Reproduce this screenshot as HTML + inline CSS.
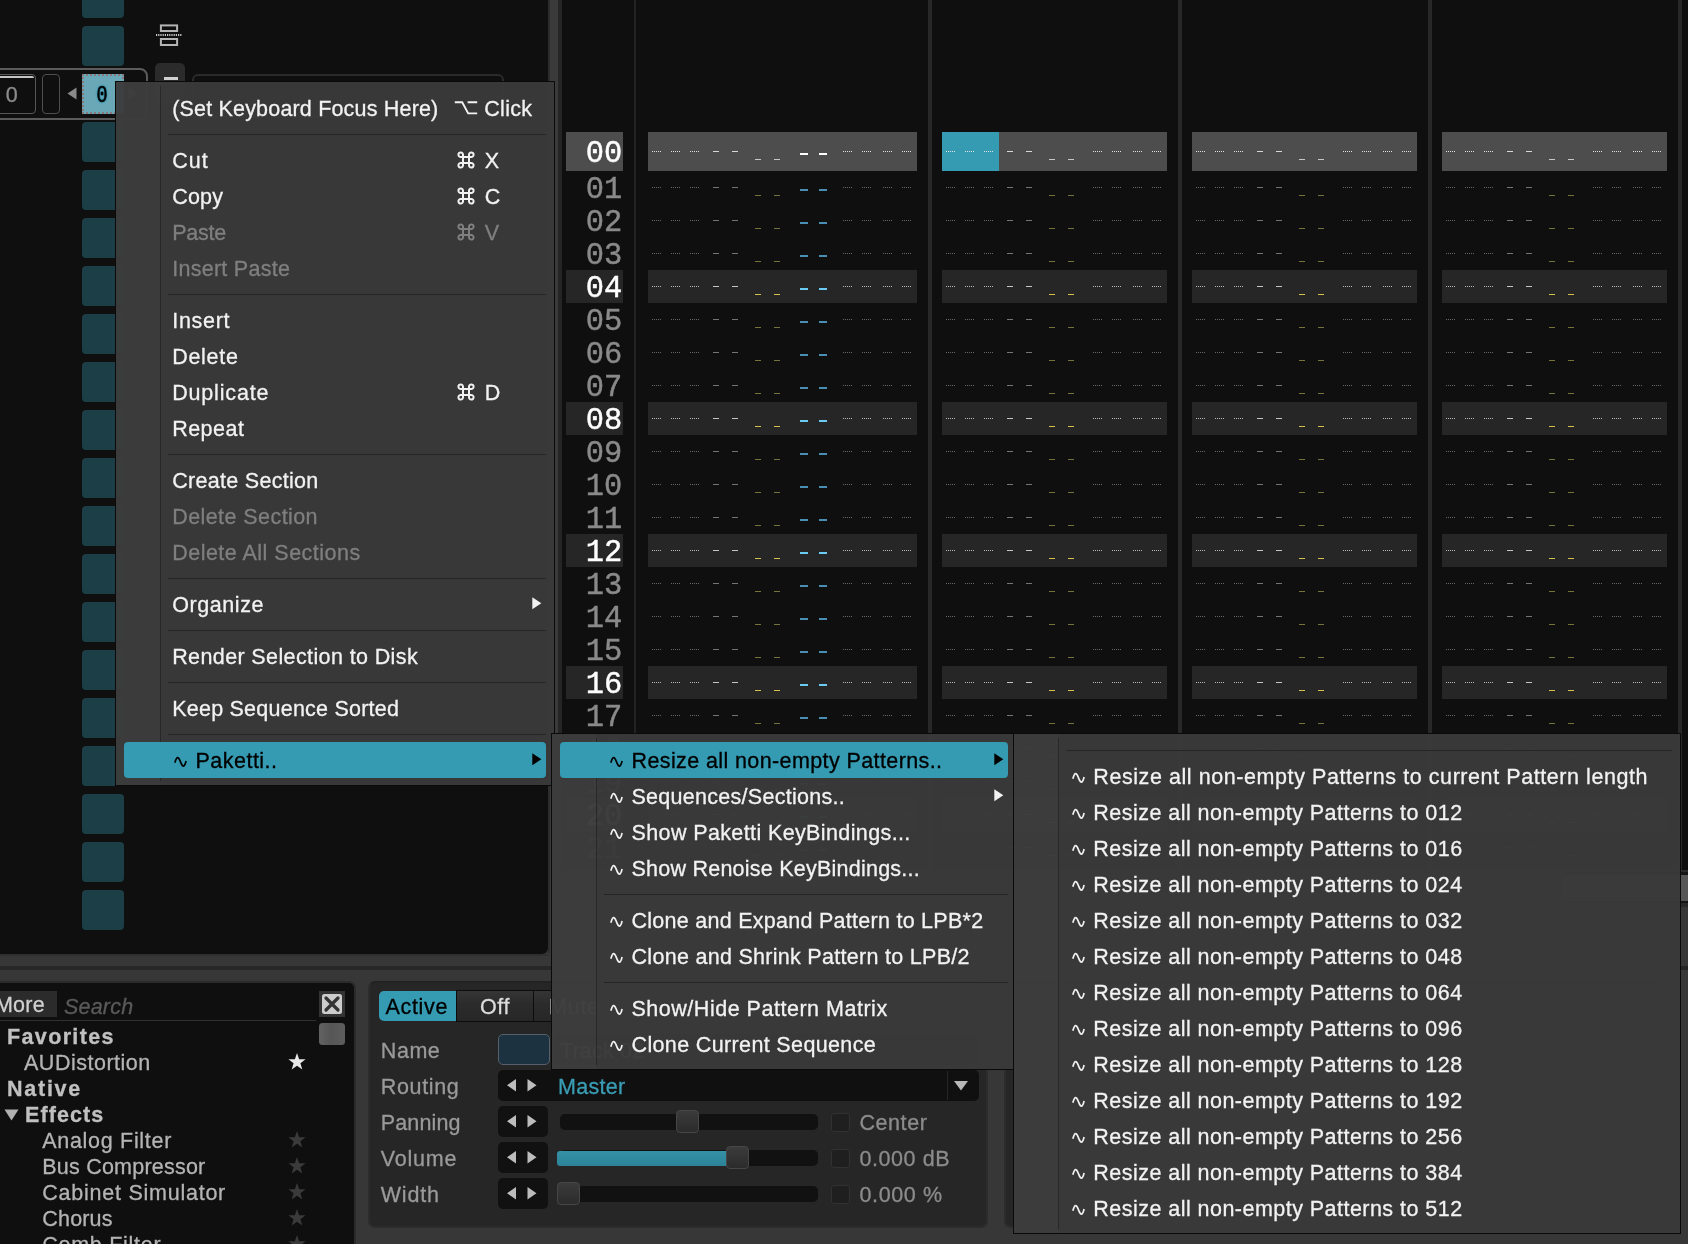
<!DOCTYPE html>
<html><head><meta charset="utf-8"><title>Renoise</title><style>
html,body{margin:0;padding:0}
body{width:1688px;height:1244px;overflow:hidden;position:relative;background:#373737;font-family:"Liberation Sans", sans-serif;font-size:21.5px}
#root{position:absolute;left:0;top:0;width:1688px;height:1244px;overflow:hidden;transform:translateZ(0);will-change:transform}
.a{position:absolute}
.t{position:absolute;white-space:nowrap;line-height:36px;height:36px;font-family:"Liberation Sans", sans-serif;font-size:21.5px;-webkit-text-stroke:0.3px}
.t.i{font-style:italic}
.t.b{font-weight:bold}
.t.mono{font-family:"Liberation Mono", monospace}
.ln{position:absolute;left:4px;width:57px;box-sizing:border-box;padding-right:0.8px;transform:scaleX(0.95);transform-origin:100% 50%;text-align:right;font-family:"Liberation Mono", monospace;font-size:32px;white-space:nowrap;-webkit-text-stroke:0.45px}
.ln.b{font-weight:bold}
.menu{background:rgba(57,57,57,0.975);border:1px solid #0a0a0a;box-sizing:border-box}
</style></head><body>
<div id="root">
<div class="a" style="left:0;top:0;width:548px;height:954px;background:#0f0f0f;border-radius:0 0 6px 0;overflow:hidden">
<div class="a" style="left:82px;top:-22px;width:42px;height:40px;background:#1c3e47;border-radius:4px;"></div>
<div class="a" style="left:82px;top:26px;width:42px;height:40px;background:#1c3e47;border-radius:4px;"></div>
<div class="a" style="left:82px;top:122px;width:42px;height:40px;background:#1c3e47;border-radius:4px;"></div>
<div class="a" style="left:82px;top:170px;width:42px;height:40px;background:#1c3e47;border-radius:4px;"></div>
<div class="a" style="left:82px;top:218px;width:42px;height:40px;background:#1c3e47;border-radius:4px;"></div>
<div class="a" style="left:82px;top:266px;width:42px;height:40px;background:#1c3e47;border-radius:4px;"></div>
<div class="a" style="left:82px;top:314px;width:42px;height:40px;background:#1c3e47;border-radius:4px;"></div>
<div class="a" style="left:82px;top:362px;width:42px;height:40px;background:#1c3e47;border-radius:4px;"></div>
<div class="a" style="left:82px;top:410px;width:42px;height:40px;background:#1c3e47;border-radius:4px;"></div>
<div class="a" style="left:82px;top:458px;width:42px;height:40px;background:#1c3e47;border-radius:4px;"></div>
<div class="a" style="left:82px;top:506px;width:42px;height:40px;background:#1c3e47;border-radius:4px;"></div>
<div class="a" style="left:82px;top:554px;width:42px;height:40px;background:#1c3e47;border-radius:4px;"></div>
<div class="a" style="left:82px;top:602px;width:42px;height:40px;background:#1c3e47;border-radius:4px;"></div>
<div class="a" style="left:82px;top:650px;width:42px;height:40px;background:#1c3e47;border-radius:4px;"></div>
<div class="a" style="left:82px;top:698px;width:42px;height:40px;background:#1c3e47;border-radius:4px;"></div>
<div class="a" style="left:82px;top:746px;width:42px;height:40px;background:#1c3e47;border-radius:4px;"></div>
<div class="a" style="left:82px;top:794px;width:42px;height:40px;background:#1c3e47;border-radius:4px;"></div>
<div class="a" style="left:82px;top:842px;width:42px;height:40px;background:#1c3e47;border-radius:4px;"></div>
<div class="a" style="left:82px;top:890px;width:42px;height:40px;background:#1c3e47;border-radius:4px;"></div>
<div class="a" style="left:-10px;top:68px;width:154px;height:48px;border:2px solid #5c5c5c;border-radius:8px;"></div>
<div class="a" style="left:-10px;top:74px;width:44px;height:38px;border:1px solid #565656;border-radius:4px;"></div>
<div class="a" style="left:-10px;top:76px;width:44px;height:2px;background:#c4c4c4;border-radius:0 2px 0 0;"></div>
<div class="a" style="left:42px;top:74px;width:16px;height:38px;border:1px solid #4e4e4e;border-radius:4px;"></div>
<svg class="a" style="left:67px;top:86.5px" width="10" height="13"><path d="M9.5,0.5 L9.5,12.5 L0.5,6.5 Z" fill="#8a8a8a"/></svg>
<svg class="a" style="left:128px;top:86.5px" width="10" height="13"><path d="M0.5,0.5 L0.5,12.5 L9.5,6.5 Z" fill="#8a8a8a"/></svg>
<div class="a" style="left:82px;top:74px;width:42px;height:40px;background:#6aa8b8;border:2px dotted #8a7878;box-sizing:border-box;"></div>
<svg class="a" style="left:155px;top:23px" width="28" height="24" fill="none" stroke="#b4b4b4" stroke-width="2"><rect x="5.9" y="2.4" width="16.2" height="5.6"/><rect x="5.9" y="16.0" width="16.2" height="6.0"/><path d="M1,12 H27" stroke-dasharray="1.2 1.0" stroke-width="1.8" stroke="#c8c8c8"/></svg>
<div class="a" style="left:155px;top:63px;width:30px;height:40px;background:#2b2b2b;border-radius:5px;"></div>
<div class="a" style="left:164px;top:77px;width:14px;height:3px;background:#d0d0d0;"></div>
<div class="a" style="left:192px;top:74px;width:308px;height:40px;border:2px solid #2b2b2b;border-radius:6px;"></div>
</div>
<span class="t it" style="left:5.8px;top:77px;color:#8c8c8c;letter-spacing:0.000px;">0</span>
<span class="t mono" style="left:95.0px;top:78px;color:#000;font-size:23px;-webkit-text-stroke:0.6px #000;transform:scaleX(0.8);text-shadow:0 0 2px #2b93ab,0 0 2px #2b93ab,0 0 3px #2b93ab">0</span>
<div class="a" style="left:548px;top:0px;width:2px;height:953px;background:#2c2c2c;"></div>
<div class="a" style="left:550px;top:0px;width:8px;height:954px;background:#3a3a3a;"></div>
<div class="a" style="left:558px;top:0px;width:4px;height:954px;background:#252525;"></div>
<div class="a" style="left:562px;top:0;width:1126px;height:870px;background:#0f0f0f;overflow:hidden">
<div class="a" style="left:72px;top:0px;width:2px;height:870px;background:#232323;"></div>
<div class="a" style="left:366px;top:0px;width:4px;height:870px;background:#282828;"></div>
<div class="a" style="left:616px;top:0px;width:4px;height:870px;background:#282828;"></div>
<div class="a" style="left:866px;top:0px;width:4px;height:870px;background:#282828;"></div>
<div class="a" style="left:1116px;top:0px;width:4px;height:870px;background:#282828;"></div>
<div class="a" style="left:4px;top:132px;width:57px;height:39px;background:#4d4d4d;"></div>
<div class="a" style="left:86px;top:132px;width:269px;height:39px;background:#4d4d4d;"></div>
<div class="a" style="left:380px;top:132px;width:225px;height:39px;background:#4d4d4d;"></div>
<div class="a" style="left:630px;top:132px;width:225px;height:39px;background:#4d4d4d;"></div>
<div class="a" style="left:880px;top:132px;width:225px;height:39px;background:#4d4d4d;"></div>
<div class="a" style="left:4px;top:270px;width:57px;height:33px;background:#262626;"></div>
<div class="a" style="left:86px;top:270px;width:269px;height:33px;background:#262626;"></div>
<div class="a" style="left:380px;top:270px;width:225px;height:33px;background:#262626;"></div>
<div class="a" style="left:630px;top:270px;width:225px;height:33px;background:#262626;"></div>
<div class="a" style="left:880px;top:270px;width:225px;height:33px;background:#262626;"></div>
<div class="a" style="left:4px;top:402px;width:57px;height:33px;background:#262626;"></div>
<div class="a" style="left:86px;top:402px;width:269px;height:33px;background:#262626;"></div>
<div class="a" style="left:380px;top:402px;width:225px;height:33px;background:#262626;"></div>
<div class="a" style="left:630px;top:402px;width:225px;height:33px;background:#262626;"></div>
<div class="a" style="left:880px;top:402px;width:225px;height:33px;background:#262626;"></div>
<div class="a" style="left:4px;top:534px;width:57px;height:33px;background:#262626;"></div>
<div class="a" style="left:86px;top:534px;width:269px;height:33px;background:#262626;"></div>
<div class="a" style="left:380px;top:534px;width:225px;height:33px;background:#262626;"></div>
<div class="a" style="left:630px;top:534px;width:225px;height:33px;background:#262626;"></div>
<div class="a" style="left:880px;top:534px;width:225px;height:33px;background:#262626;"></div>
<div class="a" style="left:4px;top:666px;width:57px;height:33px;background:#262626;"></div>
<div class="a" style="left:86px;top:666px;width:269px;height:33px;background:#262626;"></div>
<div class="a" style="left:380px;top:666px;width:225px;height:33px;background:#262626;"></div>
<div class="a" style="left:630px;top:666px;width:225px;height:33px;background:#262626;"></div>
<div class="a" style="left:880px;top:666px;width:225px;height:33px;background:#262626;"></div>
<div class="a" style="left:4px;top:798px;width:57px;height:33px;background:#262626;"></div>
<div class="a" style="left:86px;top:798px;width:269px;height:33px;background:#262626;"></div>
<div class="a" style="left:380px;top:798px;width:225px;height:33px;background:#262626;"></div>
<div class="a" style="left:630px;top:798px;width:225px;height:33px;background:#262626;"></div>
<div class="a" style="left:880px;top:798px;width:225px;height:33px;background:#262626;"></div>
<div class="a" style="left:380px;top:132px;width:57px;height:39px;background:#359bb2;"></div>
<svg class="a" style="left:0;top:0" width="1126" height="870" shape-rendering="crispEdges" fill="none"><path d="M90,151.5h1m1,0h1m1,0h1m1,0h1m1,0h1M109,151.5h1m1,0h1m1,0h1m1,0h1m1,0h1M128,151.5h1m1,0h1m1,0h1m1,0h1m1,0h1M281,151.5h1m1,0h1m1,0h1m1,0h1m1,0h1M300,151.5h1m1,0h1m1,0h1m1,0h1m1,0h1M321,151.5h1m1,0h1m1,0h1m1,0h1m1,0h1M340,151.5h1m1,0h1m1,0h1m1,0h1m1,0h1M384,151.5h1m1,0h1m1,0h1m1,0h1m1,0h1M403,151.5h1m1,0h1m1,0h1m1,0h1m1,0h1M422,151.5h1m1,0h1m1,0h1m1,0h1m1,0h1M531,151.5h1m1,0h1m1,0h1m1,0h1m1,0h1M550,151.5h1m1,0h1m1,0h1m1,0h1m1,0h1M571,151.5h1m1,0h1m1,0h1m1,0h1m1,0h1M590,151.5h1m1,0h1m1,0h1m1,0h1m1,0h1M634,151.5h1m1,0h1m1,0h1m1,0h1m1,0h1M653,151.5h1m1,0h1m1,0h1m1,0h1m1,0h1M672,151.5h1m1,0h1m1,0h1m1,0h1m1,0h1M781,151.5h1m1,0h1m1,0h1m1,0h1m1,0h1M800,151.5h1m1,0h1m1,0h1m1,0h1m1,0h1M821,151.5h1m1,0h1m1,0h1m1,0h1m1,0h1M840,151.5h1m1,0h1m1,0h1m1,0h1m1,0h1M884,151.5h1m1,0h1m1,0h1m1,0h1m1,0h1M903,151.5h1m1,0h1m1,0h1m1,0h1m1,0h1M922,151.5h1m1,0h1m1,0h1m1,0h1m1,0h1M1031,151.5h1m1,0h1m1,0h1m1,0h1m1,0h1M1050,151.5h1m1,0h1m1,0h1m1,0h1m1,0h1M1071,151.5h1m1,0h1m1,0h1m1,0h1m1,0h1M1090,151.5h1m1,0h1m1,0h1m1,0h1m1,0h1" stroke="#e0e0e0"/><path d="M151,151.5h6M170,151.5h6M445,151.5h6M464,151.5h6M695,151.5h6M714,151.5h6M945,151.5h6M964,151.5h6" stroke="#d8d8d8"/><path d="M193,159.5h6M212,159.5h6M487,159.5h6M506,159.5h6M737,159.5h6M756,159.5h6M987,159.5h6M1006,159.5h6" stroke="#c8c8c8"/><path d="M238,154h8M257,154h8" stroke="#ffffff" stroke-width="2"/><path d="M90,187.5h1m1,0h1m1,0h1m1,0h1m1,0h1M109,187.5h1m1,0h1m1,0h1m1,0h1m1,0h1M128,187.5h1m1,0h1m1,0h1m1,0h1m1,0h1M281,187.5h1m1,0h1m1,0h1m1,0h1m1,0h1M300,187.5h1m1,0h1m1,0h1m1,0h1m1,0h1M321,187.5h1m1,0h1m1,0h1m1,0h1m1,0h1M340,187.5h1m1,0h1m1,0h1m1,0h1m1,0h1M384,187.5h1m1,0h1m1,0h1m1,0h1m1,0h1M403,187.5h1m1,0h1m1,0h1m1,0h1m1,0h1M422,187.5h1m1,0h1m1,0h1m1,0h1m1,0h1M531,187.5h1m1,0h1m1,0h1m1,0h1m1,0h1M550,187.5h1m1,0h1m1,0h1m1,0h1m1,0h1M571,187.5h1m1,0h1m1,0h1m1,0h1m1,0h1M590,187.5h1m1,0h1m1,0h1m1,0h1m1,0h1M634,187.5h1m1,0h1m1,0h1m1,0h1m1,0h1M653,187.5h1m1,0h1m1,0h1m1,0h1m1,0h1M672,187.5h1m1,0h1m1,0h1m1,0h1m1,0h1M781,187.5h1m1,0h1m1,0h1m1,0h1m1,0h1M800,187.5h1m1,0h1m1,0h1m1,0h1m1,0h1M821,187.5h1m1,0h1m1,0h1m1,0h1m1,0h1M840,187.5h1m1,0h1m1,0h1m1,0h1m1,0h1M884,187.5h1m1,0h1m1,0h1m1,0h1m1,0h1M903,187.5h1m1,0h1m1,0h1m1,0h1m1,0h1M922,187.5h1m1,0h1m1,0h1m1,0h1m1,0h1M1031,187.5h1m1,0h1m1,0h1m1,0h1m1,0h1M1050,187.5h1m1,0h1m1,0h1m1,0h1m1,0h1M1071,187.5h1m1,0h1m1,0h1m1,0h1m1,0h1M1090,187.5h1m1,0h1m1,0h1m1,0h1m1,0h1" stroke="#666666"/><path d="M151,187.5h6M170,187.5h6M445,187.5h6M464,187.5h6M695,187.5h6M714,187.5h6M945,187.5h6M964,187.5h6" stroke="#747474"/><path d="M193,195.5h6M212,195.5h6M487,195.5h6M506,195.5h6M737,195.5h6M756,195.5h6M987,195.5h6M1006,195.5h6" stroke="#76733a"/><path d="M238,190h8M257,190h8" stroke="#4a8fb3" stroke-width="2"/><path d="M90,220.5h1m1,0h1m1,0h1m1,0h1m1,0h1M109,220.5h1m1,0h1m1,0h1m1,0h1m1,0h1M128,220.5h1m1,0h1m1,0h1m1,0h1m1,0h1M281,220.5h1m1,0h1m1,0h1m1,0h1m1,0h1M300,220.5h1m1,0h1m1,0h1m1,0h1m1,0h1M321,220.5h1m1,0h1m1,0h1m1,0h1m1,0h1M340,220.5h1m1,0h1m1,0h1m1,0h1m1,0h1M384,220.5h1m1,0h1m1,0h1m1,0h1m1,0h1M403,220.5h1m1,0h1m1,0h1m1,0h1m1,0h1M422,220.5h1m1,0h1m1,0h1m1,0h1m1,0h1M531,220.5h1m1,0h1m1,0h1m1,0h1m1,0h1M550,220.5h1m1,0h1m1,0h1m1,0h1m1,0h1M571,220.5h1m1,0h1m1,0h1m1,0h1m1,0h1M590,220.5h1m1,0h1m1,0h1m1,0h1m1,0h1M634,220.5h1m1,0h1m1,0h1m1,0h1m1,0h1M653,220.5h1m1,0h1m1,0h1m1,0h1m1,0h1M672,220.5h1m1,0h1m1,0h1m1,0h1m1,0h1M781,220.5h1m1,0h1m1,0h1m1,0h1m1,0h1M800,220.5h1m1,0h1m1,0h1m1,0h1m1,0h1M821,220.5h1m1,0h1m1,0h1m1,0h1m1,0h1M840,220.5h1m1,0h1m1,0h1m1,0h1m1,0h1M884,220.5h1m1,0h1m1,0h1m1,0h1m1,0h1M903,220.5h1m1,0h1m1,0h1m1,0h1m1,0h1M922,220.5h1m1,0h1m1,0h1m1,0h1m1,0h1M1031,220.5h1m1,0h1m1,0h1m1,0h1m1,0h1M1050,220.5h1m1,0h1m1,0h1m1,0h1m1,0h1M1071,220.5h1m1,0h1m1,0h1m1,0h1m1,0h1M1090,220.5h1m1,0h1m1,0h1m1,0h1m1,0h1" stroke="#666666"/><path d="M151,220.5h6M170,220.5h6M445,220.5h6M464,220.5h6M695,220.5h6M714,220.5h6M945,220.5h6M964,220.5h6" stroke="#747474"/><path d="M193,228.5h6M212,228.5h6M487,228.5h6M506,228.5h6M737,228.5h6M756,228.5h6M987,228.5h6M1006,228.5h6" stroke="#76733a"/><path d="M238,223h8M257,223h8" stroke="#4a8fb3" stroke-width="2"/><path d="M90,253.5h1m1,0h1m1,0h1m1,0h1m1,0h1M109,253.5h1m1,0h1m1,0h1m1,0h1m1,0h1M128,253.5h1m1,0h1m1,0h1m1,0h1m1,0h1M281,253.5h1m1,0h1m1,0h1m1,0h1m1,0h1M300,253.5h1m1,0h1m1,0h1m1,0h1m1,0h1M321,253.5h1m1,0h1m1,0h1m1,0h1m1,0h1M340,253.5h1m1,0h1m1,0h1m1,0h1m1,0h1M384,253.5h1m1,0h1m1,0h1m1,0h1m1,0h1M403,253.5h1m1,0h1m1,0h1m1,0h1m1,0h1M422,253.5h1m1,0h1m1,0h1m1,0h1m1,0h1M531,253.5h1m1,0h1m1,0h1m1,0h1m1,0h1M550,253.5h1m1,0h1m1,0h1m1,0h1m1,0h1M571,253.5h1m1,0h1m1,0h1m1,0h1m1,0h1M590,253.5h1m1,0h1m1,0h1m1,0h1m1,0h1M634,253.5h1m1,0h1m1,0h1m1,0h1m1,0h1M653,253.5h1m1,0h1m1,0h1m1,0h1m1,0h1M672,253.5h1m1,0h1m1,0h1m1,0h1m1,0h1M781,253.5h1m1,0h1m1,0h1m1,0h1m1,0h1M800,253.5h1m1,0h1m1,0h1m1,0h1m1,0h1M821,253.5h1m1,0h1m1,0h1m1,0h1m1,0h1M840,253.5h1m1,0h1m1,0h1m1,0h1m1,0h1M884,253.5h1m1,0h1m1,0h1m1,0h1m1,0h1M903,253.5h1m1,0h1m1,0h1m1,0h1m1,0h1M922,253.5h1m1,0h1m1,0h1m1,0h1m1,0h1M1031,253.5h1m1,0h1m1,0h1m1,0h1m1,0h1M1050,253.5h1m1,0h1m1,0h1m1,0h1m1,0h1M1071,253.5h1m1,0h1m1,0h1m1,0h1m1,0h1M1090,253.5h1m1,0h1m1,0h1m1,0h1m1,0h1" stroke="#666666"/><path d="M151,253.5h6M170,253.5h6M445,253.5h6M464,253.5h6M695,253.5h6M714,253.5h6M945,253.5h6M964,253.5h6" stroke="#747474"/><path d="M193,261.5h6M212,261.5h6M487,261.5h6M506,261.5h6M737,261.5h6M756,261.5h6M987,261.5h6M1006,261.5h6" stroke="#76733a"/><path d="M238,256h8M257,256h8" stroke="#4a8fb3" stroke-width="2"/><path d="M90,286.5h1m1,0h1m1,0h1m1,0h1m1,0h1M109,286.5h1m1,0h1m1,0h1m1,0h1m1,0h1M128,286.5h1m1,0h1m1,0h1m1,0h1m1,0h1M281,286.5h1m1,0h1m1,0h1m1,0h1m1,0h1M300,286.5h1m1,0h1m1,0h1m1,0h1m1,0h1M321,286.5h1m1,0h1m1,0h1m1,0h1m1,0h1M340,286.5h1m1,0h1m1,0h1m1,0h1m1,0h1M384,286.5h1m1,0h1m1,0h1m1,0h1m1,0h1M403,286.5h1m1,0h1m1,0h1m1,0h1m1,0h1M422,286.5h1m1,0h1m1,0h1m1,0h1m1,0h1M531,286.5h1m1,0h1m1,0h1m1,0h1m1,0h1M550,286.5h1m1,0h1m1,0h1m1,0h1m1,0h1M571,286.5h1m1,0h1m1,0h1m1,0h1m1,0h1M590,286.5h1m1,0h1m1,0h1m1,0h1m1,0h1M634,286.5h1m1,0h1m1,0h1m1,0h1m1,0h1M653,286.5h1m1,0h1m1,0h1m1,0h1m1,0h1M672,286.5h1m1,0h1m1,0h1m1,0h1m1,0h1M781,286.5h1m1,0h1m1,0h1m1,0h1m1,0h1M800,286.5h1m1,0h1m1,0h1m1,0h1m1,0h1M821,286.5h1m1,0h1m1,0h1m1,0h1m1,0h1M840,286.5h1m1,0h1m1,0h1m1,0h1m1,0h1M884,286.5h1m1,0h1m1,0h1m1,0h1m1,0h1M903,286.5h1m1,0h1m1,0h1m1,0h1m1,0h1M922,286.5h1m1,0h1m1,0h1m1,0h1m1,0h1M1031,286.5h1m1,0h1m1,0h1m1,0h1m1,0h1M1050,286.5h1m1,0h1m1,0h1m1,0h1m1,0h1M1071,286.5h1m1,0h1m1,0h1m1,0h1m1,0h1M1090,286.5h1m1,0h1m1,0h1m1,0h1m1,0h1" stroke="#b8b8b8"/><path d="M151,286.5h6M170,286.5h6M445,286.5h6M464,286.5h6M695,286.5h6M714,286.5h6M945,286.5h6M964,286.5h6" stroke="#c4c4c4"/><path d="M193,294.5h6M212,294.5h6M487,294.5h6M506,294.5h6M737,294.5h6M756,294.5h6M987,294.5h6M1006,294.5h6" stroke="#d4c04a"/><path d="M238,289h8M257,289h8" stroke="#6ccbf3" stroke-width="2"/><path d="M90,319.5h1m1,0h1m1,0h1m1,0h1m1,0h1M109,319.5h1m1,0h1m1,0h1m1,0h1m1,0h1M128,319.5h1m1,0h1m1,0h1m1,0h1m1,0h1M281,319.5h1m1,0h1m1,0h1m1,0h1m1,0h1M300,319.5h1m1,0h1m1,0h1m1,0h1m1,0h1M321,319.5h1m1,0h1m1,0h1m1,0h1m1,0h1M340,319.5h1m1,0h1m1,0h1m1,0h1m1,0h1M384,319.5h1m1,0h1m1,0h1m1,0h1m1,0h1M403,319.5h1m1,0h1m1,0h1m1,0h1m1,0h1M422,319.5h1m1,0h1m1,0h1m1,0h1m1,0h1M531,319.5h1m1,0h1m1,0h1m1,0h1m1,0h1M550,319.5h1m1,0h1m1,0h1m1,0h1m1,0h1M571,319.5h1m1,0h1m1,0h1m1,0h1m1,0h1M590,319.5h1m1,0h1m1,0h1m1,0h1m1,0h1M634,319.5h1m1,0h1m1,0h1m1,0h1m1,0h1M653,319.5h1m1,0h1m1,0h1m1,0h1m1,0h1M672,319.5h1m1,0h1m1,0h1m1,0h1m1,0h1M781,319.5h1m1,0h1m1,0h1m1,0h1m1,0h1M800,319.5h1m1,0h1m1,0h1m1,0h1m1,0h1M821,319.5h1m1,0h1m1,0h1m1,0h1m1,0h1M840,319.5h1m1,0h1m1,0h1m1,0h1m1,0h1M884,319.5h1m1,0h1m1,0h1m1,0h1m1,0h1M903,319.5h1m1,0h1m1,0h1m1,0h1m1,0h1M922,319.5h1m1,0h1m1,0h1m1,0h1m1,0h1M1031,319.5h1m1,0h1m1,0h1m1,0h1m1,0h1M1050,319.5h1m1,0h1m1,0h1m1,0h1m1,0h1M1071,319.5h1m1,0h1m1,0h1m1,0h1m1,0h1M1090,319.5h1m1,0h1m1,0h1m1,0h1m1,0h1" stroke="#666666"/><path d="M151,319.5h6M170,319.5h6M445,319.5h6M464,319.5h6M695,319.5h6M714,319.5h6M945,319.5h6M964,319.5h6" stroke="#747474"/><path d="M193,327.5h6M212,327.5h6M487,327.5h6M506,327.5h6M737,327.5h6M756,327.5h6M987,327.5h6M1006,327.5h6" stroke="#76733a"/><path d="M238,322h8M257,322h8" stroke="#4a8fb3" stroke-width="2"/><path d="M90,352.5h1m1,0h1m1,0h1m1,0h1m1,0h1M109,352.5h1m1,0h1m1,0h1m1,0h1m1,0h1M128,352.5h1m1,0h1m1,0h1m1,0h1m1,0h1M281,352.5h1m1,0h1m1,0h1m1,0h1m1,0h1M300,352.5h1m1,0h1m1,0h1m1,0h1m1,0h1M321,352.5h1m1,0h1m1,0h1m1,0h1m1,0h1M340,352.5h1m1,0h1m1,0h1m1,0h1m1,0h1M384,352.5h1m1,0h1m1,0h1m1,0h1m1,0h1M403,352.5h1m1,0h1m1,0h1m1,0h1m1,0h1M422,352.5h1m1,0h1m1,0h1m1,0h1m1,0h1M531,352.5h1m1,0h1m1,0h1m1,0h1m1,0h1M550,352.5h1m1,0h1m1,0h1m1,0h1m1,0h1M571,352.5h1m1,0h1m1,0h1m1,0h1m1,0h1M590,352.5h1m1,0h1m1,0h1m1,0h1m1,0h1M634,352.5h1m1,0h1m1,0h1m1,0h1m1,0h1M653,352.5h1m1,0h1m1,0h1m1,0h1m1,0h1M672,352.5h1m1,0h1m1,0h1m1,0h1m1,0h1M781,352.5h1m1,0h1m1,0h1m1,0h1m1,0h1M800,352.5h1m1,0h1m1,0h1m1,0h1m1,0h1M821,352.5h1m1,0h1m1,0h1m1,0h1m1,0h1M840,352.5h1m1,0h1m1,0h1m1,0h1m1,0h1M884,352.5h1m1,0h1m1,0h1m1,0h1m1,0h1M903,352.5h1m1,0h1m1,0h1m1,0h1m1,0h1M922,352.5h1m1,0h1m1,0h1m1,0h1m1,0h1M1031,352.5h1m1,0h1m1,0h1m1,0h1m1,0h1M1050,352.5h1m1,0h1m1,0h1m1,0h1m1,0h1M1071,352.5h1m1,0h1m1,0h1m1,0h1m1,0h1M1090,352.5h1m1,0h1m1,0h1m1,0h1m1,0h1" stroke="#666666"/><path d="M151,352.5h6M170,352.5h6M445,352.5h6M464,352.5h6M695,352.5h6M714,352.5h6M945,352.5h6M964,352.5h6" stroke="#747474"/><path d="M193,360.5h6M212,360.5h6M487,360.5h6M506,360.5h6M737,360.5h6M756,360.5h6M987,360.5h6M1006,360.5h6" stroke="#76733a"/><path d="M238,355h8M257,355h8" stroke="#4a8fb3" stroke-width="2"/><path d="M90,385.5h1m1,0h1m1,0h1m1,0h1m1,0h1M109,385.5h1m1,0h1m1,0h1m1,0h1m1,0h1M128,385.5h1m1,0h1m1,0h1m1,0h1m1,0h1M281,385.5h1m1,0h1m1,0h1m1,0h1m1,0h1M300,385.5h1m1,0h1m1,0h1m1,0h1m1,0h1M321,385.5h1m1,0h1m1,0h1m1,0h1m1,0h1M340,385.5h1m1,0h1m1,0h1m1,0h1m1,0h1M384,385.5h1m1,0h1m1,0h1m1,0h1m1,0h1M403,385.5h1m1,0h1m1,0h1m1,0h1m1,0h1M422,385.5h1m1,0h1m1,0h1m1,0h1m1,0h1M531,385.5h1m1,0h1m1,0h1m1,0h1m1,0h1M550,385.5h1m1,0h1m1,0h1m1,0h1m1,0h1M571,385.5h1m1,0h1m1,0h1m1,0h1m1,0h1M590,385.5h1m1,0h1m1,0h1m1,0h1m1,0h1M634,385.5h1m1,0h1m1,0h1m1,0h1m1,0h1M653,385.5h1m1,0h1m1,0h1m1,0h1m1,0h1M672,385.5h1m1,0h1m1,0h1m1,0h1m1,0h1M781,385.5h1m1,0h1m1,0h1m1,0h1m1,0h1M800,385.5h1m1,0h1m1,0h1m1,0h1m1,0h1M821,385.5h1m1,0h1m1,0h1m1,0h1m1,0h1M840,385.5h1m1,0h1m1,0h1m1,0h1m1,0h1M884,385.5h1m1,0h1m1,0h1m1,0h1m1,0h1M903,385.5h1m1,0h1m1,0h1m1,0h1m1,0h1M922,385.5h1m1,0h1m1,0h1m1,0h1m1,0h1M1031,385.5h1m1,0h1m1,0h1m1,0h1m1,0h1M1050,385.5h1m1,0h1m1,0h1m1,0h1m1,0h1M1071,385.5h1m1,0h1m1,0h1m1,0h1m1,0h1M1090,385.5h1m1,0h1m1,0h1m1,0h1m1,0h1" stroke="#666666"/><path d="M151,385.5h6M170,385.5h6M445,385.5h6M464,385.5h6M695,385.5h6M714,385.5h6M945,385.5h6M964,385.5h6" stroke="#747474"/><path d="M193,393.5h6M212,393.5h6M487,393.5h6M506,393.5h6M737,393.5h6M756,393.5h6M987,393.5h6M1006,393.5h6" stroke="#76733a"/><path d="M238,388h8M257,388h8" stroke="#4a8fb3" stroke-width="2"/><path d="M90,418.5h1m1,0h1m1,0h1m1,0h1m1,0h1M109,418.5h1m1,0h1m1,0h1m1,0h1m1,0h1M128,418.5h1m1,0h1m1,0h1m1,0h1m1,0h1M281,418.5h1m1,0h1m1,0h1m1,0h1m1,0h1M300,418.5h1m1,0h1m1,0h1m1,0h1m1,0h1M321,418.5h1m1,0h1m1,0h1m1,0h1m1,0h1M340,418.5h1m1,0h1m1,0h1m1,0h1m1,0h1M384,418.5h1m1,0h1m1,0h1m1,0h1m1,0h1M403,418.5h1m1,0h1m1,0h1m1,0h1m1,0h1M422,418.5h1m1,0h1m1,0h1m1,0h1m1,0h1M531,418.5h1m1,0h1m1,0h1m1,0h1m1,0h1M550,418.5h1m1,0h1m1,0h1m1,0h1m1,0h1M571,418.5h1m1,0h1m1,0h1m1,0h1m1,0h1M590,418.5h1m1,0h1m1,0h1m1,0h1m1,0h1M634,418.5h1m1,0h1m1,0h1m1,0h1m1,0h1M653,418.5h1m1,0h1m1,0h1m1,0h1m1,0h1M672,418.5h1m1,0h1m1,0h1m1,0h1m1,0h1M781,418.5h1m1,0h1m1,0h1m1,0h1m1,0h1M800,418.5h1m1,0h1m1,0h1m1,0h1m1,0h1M821,418.5h1m1,0h1m1,0h1m1,0h1m1,0h1M840,418.5h1m1,0h1m1,0h1m1,0h1m1,0h1M884,418.5h1m1,0h1m1,0h1m1,0h1m1,0h1M903,418.5h1m1,0h1m1,0h1m1,0h1m1,0h1M922,418.5h1m1,0h1m1,0h1m1,0h1m1,0h1M1031,418.5h1m1,0h1m1,0h1m1,0h1m1,0h1M1050,418.5h1m1,0h1m1,0h1m1,0h1m1,0h1M1071,418.5h1m1,0h1m1,0h1m1,0h1m1,0h1M1090,418.5h1m1,0h1m1,0h1m1,0h1m1,0h1" stroke="#b8b8b8"/><path d="M151,418.5h6M170,418.5h6M445,418.5h6M464,418.5h6M695,418.5h6M714,418.5h6M945,418.5h6M964,418.5h6" stroke="#c4c4c4"/><path d="M193,426.5h6M212,426.5h6M487,426.5h6M506,426.5h6M737,426.5h6M756,426.5h6M987,426.5h6M1006,426.5h6" stroke="#d4c04a"/><path d="M238,421h8M257,421h8" stroke="#6ccbf3" stroke-width="2"/><path d="M90,451.5h1m1,0h1m1,0h1m1,0h1m1,0h1M109,451.5h1m1,0h1m1,0h1m1,0h1m1,0h1M128,451.5h1m1,0h1m1,0h1m1,0h1m1,0h1M281,451.5h1m1,0h1m1,0h1m1,0h1m1,0h1M300,451.5h1m1,0h1m1,0h1m1,0h1m1,0h1M321,451.5h1m1,0h1m1,0h1m1,0h1m1,0h1M340,451.5h1m1,0h1m1,0h1m1,0h1m1,0h1M384,451.5h1m1,0h1m1,0h1m1,0h1m1,0h1M403,451.5h1m1,0h1m1,0h1m1,0h1m1,0h1M422,451.5h1m1,0h1m1,0h1m1,0h1m1,0h1M531,451.5h1m1,0h1m1,0h1m1,0h1m1,0h1M550,451.5h1m1,0h1m1,0h1m1,0h1m1,0h1M571,451.5h1m1,0h1m1,0h1m1,0h1m1,0h1M590,451.5h1m1,0h1m1,0h1m1,0h1m1,0h1M634,451.5h1m1,0h1m1,0h1m1,0h1m1,0h1M653,451.5h1m1,0h1m1,0h1m1,0h1m1,0h1M672,451.5h1m1,0h1m1,0h1m1,0h1m1,0h1M781,451.5h1m1,0h1m1,0h1m1,0h1m1,0h1M800,451.5h1m1,0h1m1,0h1m1,0h1m1,0h1M821,451.5h1m1,0h1m1,0h1m1,0h1m1,0h1M840,451.5h1m1,0h1m1,0h1m1,0h1m1,0h1M884,451.5h1m1,0h1m1,0h1m1,0h1m1,0h1M903,451.5h1m1,0h1m1,0h1m1,0h1m1,0h1M922,451.5h1m1,0h1m1,0h1m1,0h1m1,0h1M1031,451.5h1m1,0h1m1,0h1m1,0h1m1,0h1M1050,451.5h1m1,0h1m1,0h1m1,0h1m1,0h1M1071,451.5h1m1,0h1m1,0h1m1,0h1m1,0h1M1090,451.5h1m1,0h1m1,0h1m1,0h1m1,0h1" stroke="#666666"/><path d="M151,451.5h6M170,451.5h6M445,451.5h6M464,451.5h6M695,451.5h6M714,451.5h6M945,451.5h6M964,451.5h6" stroke="#747474"/><path d="M193,459.5h6M212,459.5h6M487,459.5h6M506,459.5h6M737,459.5h6M756,459.5h6M987,459.5h6M1006,459.5h6" stroke="#76733a"/><path d="M238,454h8M257,454h8" stroke="#4a8fb3" stroke-width="2"/><path d="M90,484.5h1m1,0h1m1,0h1m1,0h1m1,0h1M109,484.5h1m1,0h1m1,0h1m1,0h1m1,0h1M128,484.5h1m1,0h1m1,0h1m1,0h1m1,0h1M281,484.5h1m1,0h1m1,0h1m1,0h1m1,0h1M300,484.5h1m1,0h1m1,0h1m1,0h1m1,0h1M321,484.5h1m1,0h1m1,0h1m1,0h1m1,0h1M340,484.5h1m1,0h1m1,0h1m1,0h1m1,0h1M384,484.5h1m1,0h1m1,0h1m1,0h1m1,0h1M403,484.5h1m1,0h1m1,0h1m1,0h1m1,0h1M422,484.5h1m1,0h1m1,0h1m1,0h1m1,0h1M531,484.5h1m1,0h1m1,0h1m1,0h1m1,0h1M550,484.5h1m1,0h1m1,0h1m1,0h1m1,0h1M571,484.5h1m1,0h1m1,0h1m1,0h1m1,0h1M590,484.5h1m1,0h1m1,0h1m1,0h1m1,0h1M634,484.5h1m1,0h1m1,0h1m1,0h1m1,0h1M653,484.5h1m1,0h1m1,0h1m1,0h1m1,0h1M672,484.5h1m1,0h1m1,0h1m1,0h1m1,0h1M781,484.5h1m1,0h1m1,0h1m1,0h1m1,0h1M800,484.5h1m1,0h1m1,0h1m1,0h1m1,0h1M821,484.5h1m1,0h1m1,0h1m1,0h1m1,0h1M840,484.5h1m1,0h1m1,0h1m1,0h1m1,0h1M884,484.5h1m1,0h1m1,0h1m1,0h1m1,0h1M903,484.5h1m1,0h1m1,0h1m1,0h1m1,0h1M922,484.5h1m1,0h1m1,0h1m1,0h1m1,0h1M1031,484.5h1m1,0h1m1,0h1m1,0h1m1,0h1M1050,484.5h1m1,0h1m1,0h1m1,0h1m1,0h1M1071,484.5h1m1,0h1m1,0h1m1,0h1m1,0h1M1090,484.5h1m1,0h1m1,0h1m1,0h1m1,0h1" stroke="#666666"/><path d="M151,484.5h6M170,484.5h6M445,484.5h6M464,484.5h6M695,484.5h6M714,484.5h6M945,484.5h6M964,484.5h6" stroke="#747474"/><path d="M193,492.5h6M212,492.5h6M487,492.5h6M506,492.5h6M737,492.5h6M756,492.5h6M987,492.5h6M1006,492.5h6" stroke="#76733a"/><path d="M238,487h8M257,487h8" stroke="#4a8fb3" stroke-width="2"/><path d="M90,517.5h1m1,0h1m1,0h1m1,0h1m1,0h1M109,517.5h1m1,0h1m1,0h1m1,0h1m1,0h1M128,517.5h1m1,0h1m1,0h1m1,0h1m1,0h1M281,517.5h1m1,0h1m1,0h1m1,0h1m1,0h1M300,517.5h1m1,0h1m1,0h1m1,0h1m1,0h1M321,517.5h1m1,0h1m1,0h1m1,0h1m1,0h1M340,517.5h1m1,0h1m1,0h1m1,0h1m1,0h1M384,517.5h1m1,0h1m1,0h1m1,0h1m1,0h1M403,517.5h1m1,0h1m1,0h1m1,0h1m1,0h1M422,517.5h1m1,0h1m1,0h1m1,0h1m1,0h1M531,517.5h1m1,0h1m1,0h1m1,0h1m1,0h1M550,517.5h1m1,0h1m1,0h1m1,0h1m1,0h1M571,517.5h1m1,0h1m1,0h1m1,0h1m1,0h1M590,517.5h1m1,0h1m1,0h1m1,0h1m1,0h1M634,517.5h1m1,0h1m1,0h1m1,0h1m1,0h1M653,517.5h1m1,0h1m1,0h1m1,0h1m1,0h1M672,517.5h1m1,0h1m1,0h1m1,0h1m1,0h1M781,517.5h1m1,0h1m1,0h1m1,0h1m1,0h1M800,517.5h1m1,0h1m1,0h1m1,0h1m1,0h1M821,517.5h1m1,0h1m1,0h1m1,0h1m1,0h1M840,517.5h1m1,0h1m1,0h1m1,0h1m1,0h1M884,517.5h1m1,0h1m1,0h1m1,0h1m1,0h1M903,517.5h1m1,0h1m1,0h1m1,0h1m1,0h1M922,517.5h1m1,0h1m1,0h1m1,0h1m1,0h1M1031,517.5h1m1,0h1m1,0h1m1,0h1m1,0h1M1050,517.5h1m1,0h1m1,0h1m1,0h1m1,0h1M1071,517.5h1m1,0h1m1,0h1m1,0h1m1,0h1M1090,517.5h1m1,0h1m1,0h1m1,0h1m1,0h1" stroke="#666666"/><path d="M151,517.5h6M170,517.5h6M445,517.5h6M464,517.5h6M695,517.5h6M714,517.5h6M945,517.5h6M964,517.5h6" stroke="#747474"/><path d="M193,525.5h6M212,525.5h6M487,525.5h6M506,525.5h6M737,525.5h6M756,525.5h6M987,525.5h6M1006,525.5h6" stroke="#76733a"/><path d="M238,520h8M257,520h8" stroke="#4a8fb3" stroke-width="2"/><path d="M90,550.5h1m1,0h1m1,0h1m1,0h1m1,0h1M109,550.5h1m1,0h1m1,0h1m1,0h1m1,0h1M128,550.5h1m1,0h1m1,0h1m1,0h1m1,0h1M281,550.5h1m1,0h1m1,0h1m1,0h1m1,0h1M300,550.5h1m1,0h1m1,0h1m1,0h1m1,0h1M321,550.5h1m1,0h1m1,0h1m1,0h1m1,0h1M340,550.5h1m1,0h1m1,0h1m1,0h1m1,0h1M384,550.5h1m1,0h1m1,0h1m1,0h1m1,0h1M403,550.5h1m1,0h1m1,0h1m1,0h1m1,0h1M422,550.5h1m1,0h1m1,0h1m1,0h1m1,0h1M531,550.5h1m1,0h1m1,0h1m1,0h1m1,0h1M550,550.5h1m1,0h1m1,0h1m1,0h1m1,0h1M571,550.5h1m1,0h1m1,0h1m1,0h1m1,0h1M590,550.5h1m1,0h1m1,0h1m1,0h1m1,0h1M634,550.5h1m1,0h1m1,0h1m1,0h1m1,0h1M653,550.5h1m1,0h1m1,0h1m1,0h1m1,0h1M672,550.5h1m1,0h1m1,0h1m1,0h1m1,0h1M781,550.5h1m1,0h1m1,0h1m1,0h1m1,0h1M800,550.5h1m1,0h1m1,0h1m1,0h1m1,0h1M821,550.5h1m1,0h1m1,0h1m1,0h1m1,0h1M840,550.5h1m1,0h1m1,0h1m1,0h1m1,0h1M884,550.5h1m1,0h1m1,0h1m1,0h1m1,0h1M903,550.5h1m1,0h1m1,0h1m1,0h1m1,0h1M922,550.5h1m1,0h1m1,0h1m1,0h1m1,0h1M1031,550.5h1m1,0h1m1,0h1m1,0h1m1,0h1M1050,550.5h1m1,0h1m1,0h1m1,0h1m1,0h1M1071,550.5h1m1,0h1m1,0h1m1,0h1m1,0h1M1090,550.5h1m1,0h1m1,0h1m1,0h1m1,0h1" stroke="#b8b8b8"/><path d="M151,550.5h6M170,550.5h6M445,550.5h6M464,550.5h6M695,550.5h6M714,550.5h6M945,550.5h6M964,550.5h6" stroke="#c4c4c4"/><path d="M193,558.5h6M212,558.5h6M487,558.5h6M506,558.5h6M737,558.5h6M756,558.5h6M987,558.5h6M1006,558.5h6" stroke="#d4c04a"/><path d="M238,553h8M257,553h8" stroke="#6ccbf3" stroke-width="2"/><path d="M90,583.5h1m1,0h1m1,0h1m1,0h1m1,0h1M109,583.5h1m1,0h1m1,0h1m1,0h1m1,0h1M128,583.5h1m1,0h1m1,0h1m1,0h1m1,0h1M281,583.5h1m1,0h1m1,0h1m1,0h1m1,0h1M300,583.5h1m1,0h1m1,0h1m1,0h1m1,0h1M321,583.5h1m1,0h1m1,0h1m1,0h1m1,0h1M340,583.5h1m1,0h1m1,0h1m1,0h1m1,0h1M384,583.5h1m1,0h1m1,0h1m1,0h1m1,0h1M403,583.5h1m1,0h1m1,0h1m1,0h1m1,0h1M422,583.5h1m1,0h1m1,0h1m1,0h1m1,0h1M531,583.5h1m1,0h1m1,0h1m1,0h1m1,0h1M550,583.5h1m1,0h1m1,0h1m1,0h1m1,0h1M571,583.5h1m1,0h1m1,0h1m1,0h1m1,0h1M590,583.5h1m1,0h1m1,0h1m1,0h1m1,0h1M634,583.5h1m1,0h1m1,0h1m1,0h1m1,0h1M653,583.5h1m1,0h1m1,0h1m1,0h1m1,0h1M672,583.5h1m1,0h1m1,0h1m1,0h1m1,0h1M781,583.5h1m1,0h1m1,0h1m1,0h1m1,0h1M800,583.5h1m1,0h1m1,0h1m1,0h1m1,0h1M821,583.5h1m1,0h1m1,0h1m1,0h1m1,0h1M840,583.5h1m1,0h1m1,0h1m1,0h1m1,0h1M884,583.5h1m1,0h1m1,0h1m1,0h1m1,0h1M903,583.5h1m1,0h1m1,0h1m1,0h1m1,0h1M922,583.5h1m1,0h1m1,0h1m1,0h1m1,0h1M1031,583.5h1m1,0h1m1,0h1m1,0h1m1,0h1M1050,583.5h1m1,0h1m1,0h1m1,0h1m1,0h1M1071,583.5h1m1,0h1m1,0h1m1,0h1m1,0h1M1090,583.5h1m1,0h1m1,0h1m1,0h1m1,0h1" stroke="#666666"/><path d="M151,583.5h6M170,583.5h6M445,583.5h6M464,583.5h6M695,583.5h6M714,583.5h6M945,583.5h6M964,583.5h6" stroke="#747474"/><path d="M193,591.5h6M212,591.5h6M487,591.5h6M506,591.5h6M737,591.5h6M756,591.5h6M987,591.5h6M1006,591.5h6" stroke="#76733a"/><path d="M238,586h8M257,586h8" stroke="#4a8fb3" stroke-width="2"/><path d="M90,616.5h1m1,0h1m1,0h1m1,0h1m1,0h1M109,616.5h1m1,0h1m1,0h1m1,0h1m1,0h1M128,616.5h1m1,0h1m1,0h1m1,0h1m1,0h1M281,616.5h1m1,0h1m1,0h1m1,0h1m1,0h1M300,616.5h1m1,0h1m1,0h1m1,0h1m1,0h1M321,616.5h1m1,0h1m1,0h1m1,0h1m1,0h1M340,616.5h1m1,0h1m1,0h1m1,0h1m1,0h1M384,616.5h1m1,0h1m1,0h1m1,0h1m1,0h1M403,616.5h1m1,0h1m1,0h1m1,0h1m1,0h1M422,616.5h1m1,0h1m1,0h1m1,0h1m1,0h1M531,616.5h1m1,0h1m1,0h1m1,0h1m1,0h1M550,616.5h1m1,0h1m1,0h1m1,0h1m1,0h1M571,616.5h1m1,0h1m1,0h1m1,0h1m1,0h1M590,616.5h1m1,0h1m1,0h1m1,0h1m1,0h1M634,616.5h1m1,0h1m1,0h1m1,0h1m1,0h1M653,616.5h1m1,0h1m1,0h1m1,0h1m1,0h1M672,616.5h1m1,0h1m1,0h1m1,0h1m1,0h1M781,616.5h1m1,0h1m1,0h1m1,0h1m1,0h1M800,616.5h1m1,0h1m1,0h1m1,0h1m1,0h1M821,616.5h1m1,0h1m1,0h1m1,0h1m1,0h1M840,616.5h1m1,0h1m1,0h1m1,0h1m1,0h1M884,616.5h1m1,0h1m1,0h1m1,0h1m1,0h1M903,616.5h1m1,0h1m1,0h1m1,0h1m1,0h1M922,616.5h1m1,0h1m1,0h1m1,0h1m1,0h1M1031,616.5h1m1,0h1m1,0h1m1,0h1m1,0h1M1050,616.5h1m1,0h1m1,0h1m1,0h1m1,0h1M1071,616.5h1m1,0h1m1,0h1m1,0h1m1,0h1M1090,616.5h1m1,0h1m1,0h1m1,0h1m1,0h1" stroke="#666666"/><path d="M151,616.5h6M170,616.5h6M445,616.5h6M464,616.5h6M695,616.5h6M714,616.5h6M945,616.5h6M964,616.5h6" stroke="#747474"/><path d="M193,624.5h6M212,624.5h6M487,624.5h6M506,624.5h6M737,624.5h6M756,624.5h6M987,624.5h6M1006,624.5h6" stroke="#76733a"/><path d="M238,619h8M257,619h8" stroke="#4a8fb3" stroke-width="2"/><path d="M90,649.5h1m1,0h1m1,0h1m1,0h1m1,0h1M109,649.5h1m1,0h1m1,0h1m1,0h1m1,0h1M128,649.5h1m1,0h1m1,0h1m1,0h1m1,0h1M281,649.5h1m1,0h1m1,0h1m1,0h1m1,0h1M300,649.5h1m1,0h1m1,0h1m1,0h1m1,0h1M321,649.5h1m1,0h1m1,0h1m1,0h1m1,0h1M340,649.5h1m1,0h1m1,0h1m1,0h1m1,0h1M384,649.5h1m1,0h1m1,0h1m1,0h1m1,0h1M403,649.5h1m1,0h1m1,0h1m1,0h1m1,0h1M422,649.5h1m1,0h1m1,0h1m1,0h1m1,0h1M531,649.5h1m1,0h1m1,0h1m1,0h1m1,0h1M550,649.5h1m1,0h1m1,0h1m1,0h1m1,0h1M571,649.5h1m1,0h1m1,0h1m1,0h1m1,0h1M590,649.5h1m1,0h1m1,0h1m1,0h1m1,0h1M634,649.5h1m1,0h1m1,0h1m1,0h1m1,0h1M653,649.5h1m1,0h1m1,0h1m1,0h1m1,0h1M672,649.5h1m1,0h1m1,0h1m1,0h1m1,0h1M781,649.5h1m1,0h1m1,0h1m1,0h1m1,0h1M800,649.5h1m1,0h1m1,0h1m1,0h1m1,0h1M821,649.5h1m1,0h1m1,0h1m1,0h1m1,0h1M840,649.5h1m1,0h1m1,0h1m1,0h1m1,0h1M884,649.5h1m1,0h1m1,0h1m1,0h1m1,0h1M903,649.5h1m1,0h1m1,0h1m1,0h1m1,0h1M922,649.5h1m1,0h1m1,0h1m1,0h1m1,0h1M1031,649.5h1m1,0h1m1,0h1m1,0h1m1,0h1M1050,649.5h1m1,0h1m1,0h1m1,0h1m1,0h1M1071,649.5h1m1,0h1m1,0h1m1,0h1m1,0h1M1090,649.5h1m1,0h1m1,0h1m1,0h1m1,0h1" stroke="#666666"/><path d="M151,649.5h6M170,649.5h6M445,649.5h6M464,649.5h6M695,649.5h6M714,649.5h6M945,649.5h6M964,649.5h6" stroke="#747474"/><path d="M193,657.5h6M212,657.5h6M487,657.5h6M506,657.5h6M737,657.5h6M756,657.5h6M987,657.5h6M1006,657.5h6" stroke="#76733a"/><path d="M238,652h8M257,652h8" stroke="#4a8fb3" stroke-width="2"/><path d="M90,682.5h1m1,0h1m1,0h1m1,0h1m1,0h1M109,682.5h1m1,0h1m1,0h1m1,0h1m1,0h1M128,682.5h1m1,0h1m1,0h1m1,0h1m1,0h1M281,682.5h1m1,0h1m1,0h1m1,0h1m1,0h1M300,682.5h1m1,0h1m1,0h1m1,0h1m1,0h1M321,682.5h1m1,0h1m1,0h1m1,0h1m1,0h1M340,682.5h1m1,0h1m1,0h1m1,0h1m1,0h1M384,682.5h1m1,0h1m1,0h1m1,0h1m1,0h1M403,682.5h1m1,0h1m1,0h1m1,0h1m1,0h1M422,682.5h1m1,0h1m1,0h1m1,0h1m1,0h1M531,682.5h1m1,0h1m1,0h1m1,0h1m1,0h1M550,682.5h1m1,0h1m1,0h1m1,0h1m1,0h1M571,682.5h1m1,0h1m1,0h1m1,0h1m1,0h1M590,682.5h1m1,0h1m1,0h1m1,0h1m1,0h1M634,682.5h1m1,0h1m1,0h1m1,0h1m1,0h1M653,682.5h1m1,0h1m1,0h1m1,0h1m1,0h1M672,682.5h1m1,0h1m1,0h1m1,0h1m1,0h1M781,682.5h1m1,0h1m1,0h1m1,0h1m1,0h1M800,682.5h1m1,0h1m1,0h1m1,0h1m1,0h1M821,682.5h1m1,0h1m1,0h1m1,0h1m1,0h1M840,682.5h1m1,0h1m1,0h1m1,0h1m1,0h1M884,682.5h1m1,0h1m1,0h1m1,0h1m1,0h1M903,682.5h1m1,0h1m1,0h1m1,0h1m1,0h1M922,682.5h1m1,0h1m1,0h1m1,0h1m1,0h1M1031,682.5h1m1,0h1m1,0h1m1,0h1m1,0h1M1050,682.5h1m1,0h1m1,0h1m1,0h1m1,0h1M1071,682.5h1m1,0h1m1,0h1m1,0h1m1,0h1M1090,682.5h1m1,0h1m1,0h1m1,0h1m1,0h1" stroke="#b8b8b8"/><path d="M151,682.5h6M170,682.5h6M445,682.5h6M464,682.5h6M695,682.5h6M714,682.5h6M945,682.5h6M964,682.5h6" stroke="#c4c4c4"/><path d="M193,690.5h6M212,690.5h6M487,690.5h6M506,690.5h6M737,690.5h6M756,690.5h6M987,690.5h6M1006,690.5h6" stroke="#d4c04a"/><path d="M238,685h8M257,685h8" stroke="#6ccbf3" stroke-width="2"/><path d="M90,715.5h1m1,0h1m1,0h1m1,0h1m1,0h1M109,715.5h1m1,0h1m1,0h1m1,0h1m1,0h1M128,715.5h1m1,0h1m1,0h1m1,0h1m1,0h1M281,715.5h1m1,0h1m1,0h1m1,0h1m1,0h1M300,715.5h1m1,0h1m1,0h1m1,0h1m1,0h1M321,715.5h1m1,0h1m1,0h1m1,0h1m1,0h1M340,715.5h1m1,0h1m1,0h1m1,0h1m1,0h1M384,715.5h1m1,0h1m1,0h1m1,0h1m1,0h1M403,715.5h1m1,0h1m1,0h1m1,0h1m1,0h1M422,715.5h1m1,0h1m1,0h1m1,0h1m1,0h1M531,715.5h1m1,0h1m1,0h1m1,0h1m1,0h1M550,715.5h1m1,0h1m1,0h1m1,0h1m1,0h1M571,715.5h1m1,0h1m1,0h1m1,0h1m1,0h1M590,715.5h1m1,0h1m1,0h1m1,0h1m1,0h1M634,715.5h1m1,0h1m1,0h1m1,0h1m1,0h1M653,715.5h1m1,0h1m1,0h1m1,0h1m1,0h1M672,715.5h1m1,0h1m1,0h1m1,0h1m1,0h1M781,715.5h1m1,0h1m1,0h1m1,0h1m1,0h1M800,715.5h1m1,0h1m1,0h1m1,0h1m1,0h1M821,715.5h1m1,0h1m1,0h1m1,0h1m1,0h1M840,715.5h1m1,0h1m1,0h1m1,0h1m1,0h1M884,715.5h1m1,0h1m1,0h1m1,0h1m1,0h1M903,715.5h1m1,0h1m1,0h1m1,0h1m1,0h1M922,715.5h1m1,0h1m1,0h1m1,0h1m1,0h1M1031,715.5h1m1,0h1m1,0h1m1,0h1m1,0h1M1050,715.5h1m1,0h1m1,0h1m1,0h1m1,0h1M1071,715.5h1m1,0h1m1,0h1m1,0h1m1,0h1M1090,715.5h1m1,0h1m1,0h1m1,0h1m1,0h1" stroke="#666666"/><path d="M151,715.5h6M170,715.5h6M445,715.5h6M464,715.5h6M695,715.5h6M714,715.5h6M945,715.5h6M964,715.5h6" stroke="#747474"/><path d="M193,723.5h6M212,723.5h6M487,723.5h6M506,723.5h6M737,723.5h6M756,723.5h6M987,723.5h6M1006,723.5h6" stroke="#76733a"/><path d="M238,718h8M257,718h8" stroke="#4a8fb3" stroke-width="2"/><path d="M90,748.5h1m1,0h1m1,0h1m1,0h1m1,0h1M109,748.5h1m1,0h1m1,0h1m1,0h1m1,0h1M128,748.5h1m1,0h1m1,0h1m1,0h1m1,0h1M281,748.5h1m1,0h1m1,0h1m1,0h1m1,0h1M300,748.5h1m1,0h1m1,0h1m1,0h1m1,0h1M321,748.5h1m1,0h1m1,0h1m1,0h1m1,0h1M340,748.5h1m1,0h1m1,0h1m1,0h1m1,0h1M384,748.5h1m1,0h1m1,0h1m1,0h1m1,0h1M403,748.5h1m1,0h1m1,0h1m1,0h1m1,0h1M422,748.5h1m1,0h1m1,0h1m1,0h1m1,0h1M531,748.5h1m1,0h1m1,0h1m1,0h1m1,0h1M550,748.5h1m1,0h1m1,0h1m1,0h1m1,0h1M571,748.5h1m1,0h1m1,0h1m1,0h1m1,0h1M590,748.5h1m1,0h1m1,0h1m1,0h1m1,0h1M634,748.5h1m1,0h1m1,0h1m1,0h1m1,0h1M653,748.5h1m1,0h1m1,0h1m1,0h1m1,0h1M672,748.5h1m1,0h1m1,0h1m1,0h1m1,0h1M781,748.5h1m1,0h1m1,0h1m1,0h1m1,0h1M800,748.5h1m1,0h1m1,0h1m1,0h1m1,0h1M821,748.5h1m1,0h1m1,0h1m1,0h1m1,0h1M840,748.5h1m1,0h1m1,0h1m1,0h1m1,0h1M884,748.5h1m1,0h1m1,0h1m1,0h1m1,0h1M903,748.5h1m1,0h1m1,0h1m1,0h1m1,0h1M922,748.5h1m1,0h1m1,0h1m1,0h1m1,0h1M1031,748.5h1m1,0h1m1,0h1m1,0h1m1,0h1M1050,748.5h1m1,0h1m1,0h1m1,0h1m1,0h1M1071,748.5h1m1,0h1m1,0h1m1,0h1m1,0h1M1090,748.5h1m1,0h1m1,0h1m1,0h1m1,0h1" stroke="#666666"/><path d="M151,748.5h6M170,748.5h6M445,748.5h6M464,748.5h6M695,748.5h6M714,748.5h6M945,748.5h6M964,748.5h6" stroke="#747474"/><path d="M193,756.5h6M212,756.5h6M487,756.5h6M506,756.5h6M737,756.5h6M756,756.5h6M987,756.5h6M1006,756.5h6" stroke="#76733a"/><path d="M238,751h8M257,751h8" stroke="#4a8fb3" stroke-width="2"/><path d="M90,781.5h1m1,0h1m1,0h1m1,0h1m1,0h1M109,781.5h1m1,0h1m1,0h1m1,0h1m1,0h1M128,781.5h1m1,0h1m1,0h1m1,0h1m1,0h1M281,781.5h1m1,0h1m1,0h1m1,0h1m1,0h1M300,781.5h1m1,0h1m1,0h1m1,0h1m1,0h1M321,781.5h1m1,0h1m1,0h1m1,0h1m1,0h1M340,781.5h1m1,0h1m1,0h1m1,0h1m1,0h1M384,781.5h1m1,0h1m1,0h1m1,0h1m1,0h1M403,781.5h1m1,0h1m1,0h1m1,0h1m1,0h1M422,781.5h1m1,0h1m1,0h1m1,0h1m1,0h1M531,781.5h1m1,0h1m1,0h1m1,0h1m1,0h1M550,781.5h1m1,0h1m1,0h1m1,0h1m1,0h1M571,781.5h1m1,0h1m1,0h1m1,0h1m1,0h1M590,781.5h1m1,0h1m1,0h1m1,0h1m1,0h1M634,781.5h1m1,0h1m1,0h1m1,0h1m1,0h1M653,781.5h1m1,0h1m1,0h1m1,0h1m1,0h1M672,781.5h1m1,0h1m1,0h1m1,0h1m1,0h1M781,781.5h1m1,0h1m1,0h1m1,0h1m1,0h1M800,781.5h1m1,0h1m1,0h1m1,0h1m1,0h1M821,781.5h1m1,0h1m1,0h1m1,0h1m1,0h1M840,781.5h1m1,0h1m1,0h1m1,0h1m1,0h1M884,781.5h1m1,0h1m1,0h1m1,0h1m1,0h1M903,781.5h1m1,0h1m1,0h1m1,0h1m1,0h1M922,781.5h1m1,0h1m1,0h1m1,0h1m1,0h1M1031,781.5h1m1,0h1m1,0h1m1,0h1m1,0h1M1050,781.5h1m1,0h1m1,0h1m1,0h1m1,0h1M1071,781.5h1m1,0h1m1,0h1m1,0h1m1,0h1M1090,781.5h1m1,0h1m1,0h1m1,0h1m1,0h1" stroke="#666666"/><path d="M151,781.5h6M170,781.5h6M445,781.5h6M464,781.5h6M695,781.5h6M714,781.5h6M945,781.5h6M964,781.5h6" stroke="#747474"/><path d="M193,789.5h6M212,789.5h6M487,789.5h6M506,789.5h6M737,789.5h6M756,789.5h6M987,789.5h6M1006,789.5h6" stroke="#76733a"/><path d="M238,784h8M257,784h8" stroke="#4a8fb3" stroke-width="2"/><path d="M90,814.5h1m1,0h1m1,0h1m1,0h1m1,0h1M109,814.5h1m1,0h1m1,0h1m1,0h1m1,0h1M128,814.5h1m1,0h1m1,0h1m1,0h1m1,0h1M281,814.5h1m1,0h1m1,0h1m1,0h1m1,0h1M300,814.5h1m1,0h1m1,0h1m1,0h1m1,0h1M321,814.5h1m1,0h1m1,0h1m1,0h1m1,0h1M340,814.5h1m1,0h1m1,0h1m1,0h1m1,0h1M384,814.5h1m1,0h1m1,0h1m1,0h1m1,0h1M403,814.5h1m1,0h1m1,0h1m1,0h1m1,0h1M422,814.5h1m1,0h1m1,0h1m1,0h1m1,0h1M531,814.5h1m1,0h1m1,0h1m1,0h1m1,0h1M550,814.5h1m1,0h1m1,0h1m1,0h1m1,0h1M571,814.5h1m1,0h1m1,0h1m1,0h1m1,0h1M590,814.5h1m1,0h1m1,0h1m1,0h1m1,0h1M634,814.5h1m1,0h1m1,0h1m1,0h1m1,0h1M653,814.5h1m1,0h1m1,0h1m1,0h1m1,0h1M672,814.5h1m1,0h1m1,0h1m1,0h1m1,0h1M781,814.5h1m1,0h1m1,0h1m1,0h1m1,0h1M800,814.5h1m1,0h1m1,0h1m1,0h1m1,0h1M821,814.5h1m1,0h1m1,0h1m1,0h1m1,0h1M840,814.5h1m1,0h1m1,0h1m1,0h1m1,0h1M884,814.5h1m1,0h1m1,0h1m1,0h1m1,0h1M903,814.5h1m1,0h1m1,0h1m1,0h1m1,0h1M922,814.5h1m1,0h1m1,0h1m1,0h1m1,0h1M1031,814.5h1m1,0h1m1,0h1m1,0h1m1,0h1M1050,814.5h1m1,0h1m1,0h1m1,0h1m1,0h1M1071,814.5h1m1,0h1m1,0h1m1,0h1m1,0h1M1090,814.5h1m1,0h1m1,0h1m1,0h1m1,0h1" stroke="#b8b8b8"/><path d="M151,814.5h6M170,814.5h6M445,814.5h6M464,814.5h6M695,814.5h6M714,814.5h6M945,814.5h6M964,814.5h6" stroke="#c4c4c4"/><path d="M193,822.5h6M212,822.5h6M487,822.5h6M506,822.5h6M737,822.5h6M756,822.5h6M987,822.5h6M1006,822.5h6" stroke="#d4c04a"/><path d="M238,817h8M257,817h8" stroke="#6ccbf3" stroke-width="2"/><path d="M90,847.5h1m1,0h1m1,0h1m1,0h1m1,0h1M109,847.5h1m1,0h1m1,0h1m1,0h1m1,0h1M128,847.5h1m1,0h1m1,0h1m1,0h1m1,0h1M281,847.5h1m1,0h1m1,0h1m1,0h1m1,0h1M300,847.5h1m1,0h1m1,0h1m1,0h1m1,0h1M321,847.5h1m1,0h1m1,0h1m1,0h1m1,0h1M340,847.5h1m1,0h1m1,0h1m1,0h1m1,0h1M384,847.5h1m1,0h1m1,0h1m1,0h1m1,0h1M403,847.5h1m1,0h1m1,0h1m1,0h1m1,0h1M422,847.5h1m1,0h1m1,0h1m1,0h1m1,0h1M531,847.5h1m1,0h1m1,0h1m1,0h1m1,0h1M550,847.5h1m1,0h1m1,0h1m1,0h1m1,0h1M571,847.5h1m1,0h1m1,0h1m1,0h1m1,0h1M590,847.5h1m1,0h1m1,0h1m1,0h1m1,0h1M634,847.5h1m1,0h1m1,0h1m1,0h1m1,0h1M653,847.5h1m1,0h1m1,0h1m1,0h1m1,0h1M672,847.5h1m1,0h1m1,0h1m1,0h1m1,0h1M781,847.5h1m1,0h1m1,0h1m1,0h1m1,0h1M800,847.5h1m1,0h1m1,0h1m1,0h1m1,0h1M821,847.5h1m1,0h1m1,0h1m1,0h1m1,0h1M840,847.5h1m1,0h1m1,0h1m1,0h1m1,0h1M884,847.5h1m1,0h1m1,0h1m1,0h1m1,0h1M903,847.5h1m1,0h1m1,0h1m1,0h1m1,0h1M922,847.5h1m1,0h1m1,0h1m1,0h1m1,0h1M1031,847.5h1m1,0h1m1,0h1m1,0h1m1,0h1M1050,847.5h1m1,0h1m1,0h1m1,0h1m1,0h1M1071,847.5h1m1,0h1m1,0h1m1,0h1m1,0h1M1090,847.5h1m1,0h1m1,0h1m1,0h1m1,0h1" stroke="#666666"/><path d="M151,847.5h6M170,847.5h6M445,847.5h6M464,847.5h6M695,847.5h6M714,847.5h6M945,847.5h6M964,847.5h6" stroke="#747474"/><path d="M193,855.5h6M212,855.5h6M487,855.5h6M506,855.5h6M737,855.5h6M756,855.5h6M987,855.5h6M1006,855.5h6" stroke="#76733a"/><path d="M238,850h8M257,850h8" stroke="#4a8fb3" stroke-width="2"/><path d="M90,880.5h1m1,0h1m1,0h1m1,0h1m1,0h1M109,880.5h1m1,0h1m1,0h1m1,0h1m1,0h1M128,880.5h1m1,0h1m1,0h1m1,0h1m1,0h1M281,880.5h1m1,0h1m1,0h1m1,0h1m1,0h1M300,880.5h1m1,0h1m1,0h1m1,0h1m1,0h1M321,880.5h1m1,0h1m1,0h1m1,0h1m1,0h1M340,880.5h1m1,0h1m1,0h1m1,0h1m1,0h1M384,880.5h1m1,0h1m1,0h1m1,0h1m1,0h1M403,880.5h1m1,0h1m1,0h1m1,0h1m1,0h1M422,880.5h1m1,0h1m1,0h1m1,0h1m1,0h1M531,880.5h1m1,0h1m1,0h1m1,0h1m1,0h1M550,880.5h1m1,0h1m1,0h1m1,0h1m1,0h1M571,880.5h1m1,0h1m1,0h1m1,0h1m1,0h1M590,880.5h1m1,0h1m1,0h1m1,0h1m1,0h1M634,880.5h1m1,0h1m1,0h1m1,0h1m1,0h1M653,880.5h1m1,0h1m1,0h1m1,0h1m1,0h1M672,880.5h1m1,0h1m1,0h1m1,0h1m1,0h1M781,880.5h1m1,0h1m1,0h1m1,0h1m1,0h1M800,880.5h1m1,0h1m1,0h1m1,0h1m1,0h1M821,880.5h1m1,0h1m1,0h1m1,0h1m1,0h1M840,880.5h1m1,0h1m1,0h1m1,0h1m1,0h1M884,880.5h1m1,0h1m1,0h1m1,0h1m1,0h1M903,880.5h1m1,0h1m1,0h1m1,0h1m1,0h1M922,880.5h1m1,0h1m1,0h1m1,0h1m1,0h1M1031,880.5h1m1,0h1m1,0h1m1,0h1m1,0h1M1050,880.5h1m1,0h1m1,0h1m1,0h1m1,0h1M1071,880.5h1m1,0h1m1,0h1m1,0h1m1,0h1M1090,880.5h1m1,0h1m1,0h1m1,0h1m1,0h1" stroke="#666666"/><path d="M151,880.5h6M170,880.5h6M445,880.5h6M464,880.5h6M695,880.5h6M714,880.5h6M945,880.5h6M964,880.5h6" stroke="#747474"/><path d="M193,888.5h6M212,888.5h6M487,888.5h6M506,888.5h6M737,888.5h6M756,888.5h6M987,888.5h6M1006,888.5h6" stroke="#76733a"/><path d="M238,883h8M257,883h8" stroke="#4a8fb3" stroke-width="2"/></svg>
<span class="ln" style="top:133.5px;height:39px;line-height:39px;color:#ffffff">00</span>
<span class="ln" style="top:172.5px;height:33px;line-height:33px;color:#8a8a8a">01</span>
<span class="ln" style="top:205.5px;height:33px;line-height:33px;color:#8a8a8a">02</span>
<span class="ln" style="top:238.5px;height:33px;line-height:33px;color:#8a8a8a">03</span>
<span class="ln" style="top:271.5px;height:33px;line-height:33px;color:#ffffff">04</span>
<span class="ln" style="top:304.5px;height:33px;line-height:33px;color:#8a8a8a">05</span>
<span class="ln" style="top:337.5px;height:33px;line-height:33px;color:#8a8a8a">06</span>
<span class="ln" style="top:370.5px;height:33px;line-height:33px;color:#8a8a8a">07</span>
<span class="ln" style="top:403.5px;height:33px;line-height:33px;color:#ffffff">08</span>
<span class="ln" style="top:436.5px;height:33px;line-height:33px;color:#8a8a8a">09</span>
<span class="ln" style="top:469.5px;height:33px;line-height:33px;color:#8a8a8a">10</span>
<span class="ln" style="top:502.5px;height:33px;line-height:33px;color:#8a8a8a">11</span>
<span class="ln" style="top:535.5px;height:33px;line-height:33px;color:#ffffff">12</span>
<span class="ln" style="top:568.5px;height:33px;line-height:33px;color:#8a8a8a">13</span>
<span class="ln" style="top:601.5px;height:33px;line-height:33px;color:#8a8a8a">14</span>
<span class="ln" style="top:634.5px;height:33px;line-height:33px;color:#8a8a8a">15</span>
<span class="ln" style="top:667.5px;height:33px;line-height:33px;color:#ffffff">16</span>
<span class="ln" style="top:700.5px;height:33px;line-height:33px;color:#8a8a8a">17</span>
<span class="ln" style="top:733.5px;height:33px;line-height:33px;color:#8a8a8a">18</span>
<span class="ln" style="top:766.5px;height:33px;line-height:33px;color:#8a8a8a">19</span>
<span class="ln" style="top:799.5px;height:33px;line-height:33px;color:#ffffff">20</span>
<span class="ln" style="top:832.5px;height:33px;line-height:33px;color:#8a8a8a">21</span>
<span class="ln" style="top:865.5px;height:33px;line-height:33px;color:#8a8a8a">22</span>
</div>
<div class="a" style="left:1562px;top:870px;width:126px;height:2px;background:#2a2a2a;"></div>
<div class="a" style="left:1562px;top:872px;width:126px;height:3px;background:#141414;"></div>
<div class="a" style="left:1562px;top:875px;width:126px;height:26px;background:#565656;"></div>
<div class="a" style="left:1562px;top:901px;width:126px;height:2px;background:#141414;"></div>
<div class="a" style="left:1562px;top:903px;width:126px;height:4px;background:#2a2a2a;"></div>
<div class="a" style="left:1562px;top:966px;width:126px;height:4px;background:#262626;"></div>
<div class="a" style="left:0px;top:966px;width:562px;height:4px;background:#272727;"></div>
<div class="a" style="left:0px;top:954px;width:548px;height:2px;background:#2f2f2f;"></div>
<div class="a" style="left:-6px;top:981px;width:362px;height:280px;background:#0f0f0f;border:2px solid #2b2b2b;border-radius:7px;box-sizing:border-box;overflow:hidden"></div>
<div class="a" style="left:0px;top:991px;width:57px;height:26px;background:#2b2b2b;"></div>
<span class="t it" style="left:-5px;top:986.5px;color:#d0d0d0;letter-spacing:0.203px;">More</span>
<span class="t it i" style="left:64px;top:988.5px;color:#5a5a5a;letter-spacing:0.206px;">Search</span>
<div class="a" style="left:0px;top:1020px;width:316px;height:1px;background:#303030;"></div>
<div class="a" style="left:319px;top:991px;width:26px;height:26px;background:#333;"></div>
<svg class="a" style="left:322px;top:994px" width="20" height="20"><rect x="0" y="0" width="20" height="20" rx="2.5" fill="#cdcdcd"/><path d="M4,4 L16,16 M16,4 L4,16" stroke="#343434" stroke-width="3.2" stroke-linecap="round"/></svg>
<div class="a" style="left:319px;top:1023px;width:26px;height:22px;background:linear-gradient(90deg,#626262,#565656 45%,#5e5e5e);border-radius:3.5px;"></div>
<span class="t it b" style="left:7px;top:1018.5px;color:#c0c0c0;letter-spacing:1.363px;">Favorites</span>
<span class="t it" style="left:24px;top:1044.5px;color:#b4b4b4;letter-spacing:0.511px;">AUDistortion</span>
<svg class="a" style="left:288px;top:1052.5px" width="18" height="17"><path d="M9,0 L11.1,6.2 L17.6,6.3 L12.4,10.3 L14.3,16.6 L9,12.8 L3.7,16.6 L5.6,10.3 L0.4,6.3 L6.9,6.2 Z" fill="#e8e8e8"/></svg>
<span class="t it b" style="left:7px;top:1070.5px;color:#c0c0c0;letter-spacing:1.744px;">Native</span>
<svg class="a" style="left:4px;top:1109px" width="15" height="12"><path d="M0.5,0.5 H14.5 L7.5,11.5 Z" fill="#b0b0b0"/></svg>
<span class="t it b" style="left:25px;top:1096.5px;color:#c0c0c0;letter-spacing:1.091px;">Effects</span>
<span class="t it" style="left:42.3px;top:1122.5px;color:#b4b4b4;letter-spacing:0.691px;">Analog Filter</span>
<svg class="a" style="left:288px;top:1130.5px" width="18" height="17"><path d="M9,0 L11.1,6.2 L17.6,6.3 L12.4,10.3 L14.3,16.6 L9,12.8 L3.7,16.6 L5.6,10.3 L0.4,6.3 L6.9,6.2 Z" fill="#3a3a3a"/></svg>
<span class="t it" style="left:42.3px;top:1148.5px;color:#b4b4b4;letter-spacing:0.219px;">Bus Compressor</span>
<svg class="a" style="left:288px;top:1156.5px" width="18" height="17"><path d="M9,0 L11.1,6.2 L17.6,6.3 L12.4,10.3 L14.3,16.6 L9,12.8 L3.7,16.6 L5.6,10.3 L0.4,6.3 L6.9,6.2 Z" fill="#3a3a3a"/></svg>
<span class="t it" style="left:42.3px;top:1174.5px;color:#b4b4b4;letter-spacing:0.756px;">Cabinet Simulator</span>
<svg class="a" style="left:288px;top:1182.5px" width="18" height="17"><path d="M9,0 L11.1,6.2 L17.6,6.3 L12.4,10.3 L14.3,16.6 L9,12.8 L3.7,16.6 L5.6,10.3 L0.4,6.3 L6.9,6.2 Z" fill="#3a3a3a"/></svg>
<span class="t it" style="left:42.3px;top:1200.5px;color:#b4b4b4;letter-spacing:0.178px;">Chorus</span>
<svg class="a" style="left:288px;top:1208.5px" width="18" height="17"><path d="M9,0 L11.1,6.2 L17.6,6.3 L12.4,10.3 L14.3,16.6 L9,12.8 L3.7,16.6 L5.6,10.3 L0.4,6.3 L6.9,6.2 Z" fill="#3a3a3a"/></svg>
<span class="t it" style="left:42.3px;top:1226.5px;color:#b4b4b4;letter-spacing:0.717px;">Comb Filter</span>
<svg class="a" style="left:288px;top:1234.5px" width="18" height="17"><path d="M9,0 L11.1,6.2 L17.6,6.3 L12.4,10.3 L14.3,16.6 L9,12.8 L3.7,16.6 L5.6,10.3 L0.4,6.3 L6.9,6.2 Z" fill="#3a3a3a"/></svg>
<div class="a" style="left:368px;top:981px;width:620px;height:247px;background:#262626;border:2px solid #2c2c2c;border-top-color:#222;border-radius:7px;box-sizing:border-box"></div>
<div class="a" style="left:379px;top:991px;width:77px;height:30px;background:#359bb2;border-radius:5px 0 0 5px;"></div>
<span class="t it" style="left:385.5px;top:988.5px;color:#000;letter-spacing:0.662px;">Active</span>
<div class="a" style="left:456px;top:990px;width:78px;height:32px;background:linear-gradient(#353535,#2b2b2b 45%,#272727);border:1px solid #0c0c0c;box-sizing:border-box;"></div>
<span class="t it" style="left:480px;top:988.5px;color:#dcdcdc;letter-spacing:0.617px;">Off</span>
<div class="a" style="left:533px;top:990px;width:78px;height:32px;background:linear-gradient(#353535,#2b2b2b 45%,#272727);border:1px solid #0c0c0c;box-sizing:border-box;"></div>
<span class="t it" style="left:549px;top:988.5px;color:#dcdcdc;letter-spacing:0.755px;">Mute</span>
<span class="t it" style="left:380.8px;top:1032.5px;color:#9a9a9a;letter-spacing:0.552px;">Name</span>
<span class="t it" style="left:380.8px;top:1068.5px;color:#9a9a9a;letter-spacing:0.646px;">Routing</span>
<span class="t it" style="left:380.8px;top:1104.5px;color:#9a9a9a;letter-spacing:0.133px;">Panning</span>
<span class="t it" style="left:380.8px;top:1140.5px;color:#9a9a9a;letter-spacing:0.794px;">Volume</span>
<span class="t it" style="left:380.8px;top:1176.5px;color:#9a9a9a;letter-spacing:0.785px;">Width</span>
<div class="a" style="left:498px;top:1034px;width:52px;height:31px;background:#1c3240;border:1px solid #55606a;border-radius:5px;box-sizing:border-box;"></div>
<div class="a" style="left:554px;top:1034px;width:424px;height:31px;background:#101010;border-radius:5px;"></div>
<span class="t it" style="left:560px;top:1032.5px;color:#d0d0d0;letter-spacing:0.185px;">Track 02</span>
<div class="a" style="left:498px;top:1070px;width:481px;height:31px;background:#101010;border-radius:5px;"></div>
<svg class="a" style="left:507px;top:1078.5px" width="30" height="13"><path d="M9,0 V12.4 L0,6.2 Z M20.5,0 V12.4 L29.5,6.2 Z" fill="#bdbdbd"/></svg>
<span class="t it" style="left:558px;top:1068.5px;color:#3a9db5;letter-spacing:0.279px;">Master</span>
<div class="a" style="left:947px;top:1071px;width:1px;height:29px;background:#262626;"></div>
<svg class="a" style="left:954px;top:1081px" width="14" height="10"><path d="M0,0 H14 L7,9.5 Z" fill="#b8b8b8"/></svg>
<div class="a" style="left:498px;top:1106px;width:50px;height:31px;background:#111111;border-radius:5px;"></div>
<svg class="a" style="left:507px;top:1115.0px" width="30" height="13"><path d="M9,0 V12.4 L0,6.2 Z M20.5,0 V12.4 L29.5,6.2 Z" fill="#bdbdbd"/></svg>
<div class="a" style="left:560px;top:1114px;width:258px;height:16px;background:#111;border-radius:5px;"></div>
<div class="a" style="left:676px;top:1110px;width:23px;height:23px;background:linear-gradient(#3b3b3b,#2b2b2b);border:1px solid #464646;border-radius:4px;box-sizing:border-box;"></div>
<div class="a" style="left:831px;top:1112.5px;width:19px;height:19px;background:#1f1f1f;border:1px solid #313131;border-radius:3px;box-sizing:border-box;"></div>
<span class="t it" style="left:859.5px;top:1104.5px;color:#8c8c8c;letter-spacing:0.556px;">Center</span>
<div class="a" style="left:498px;top:1142px;width:50px;height:31px;background:#111111;border-radius:5px;"></div>
<svg class="a" style="left:507px;top:1151.0px" width="30" height="13"><path d="M9,0 V12.4 L0,6.2 Z M20.5,0 V12.4 L29.5,6.2 Z" fill="#bdbdbd"/></svg>
<div class="a" style="left:560px;top:1150px;width:258px;height:16px;background:#111;border-radius:5px;"></div>
<div class="a" style="left:557px;top:1150.5px;width:170px;height:15px;background:linear-gradient(#3591a6,#2c8397);border-radius:3px 0 0 3px;"></div>
<div class="a" style="left:726px;top:1146px;width:23px;height:23px;background:linear-gradient(#3b3b3b,#2b2b2b);border:1px solid #464646;border-radius:4px;box-sizing:border-box;"></div>
<div class="a" style="left:831px;top:1148.5px;width:19px;height:19px;background:#1f1f1f;border:1px solid #313131;border-radius:3px;box-sizing:border-box;"></div>
<span class="t it" style="left:859.5px;top:1140.5px;color:#8c8c8c;letter-spacing:0.565px;">0.000 dB</span>
<div class="a" style="left:498px;top:1178px;width:50px;height:31px;background:#111111;border-radius:5px;"></div>
<svg class="a" style="left:507px;top:1187.0px" width="30" height="13"><path d="M9,0 V12.4 L0,6.2 Z M20.5,0 V12.4 L29.5,6.2 Z" fill="#bdbdbd"/></svg>
<div class="a" style="left:560px;top:1186px;width:258px;height:16px;background:#111;border-radius:5px;"></div>
<div class="a" style="left:557px;top:1182px;width:23px;height:23px;background:linear-gradient(#3b3b3b,#2b2b2b);border:1px solid #464646;border-radius:4px;box-sizing:border-box;"></div>
<div class="a" style="left:831px;top:1184.5px;width:19px;height:19px;background:#1f1f1f;border:1px solid #313131;border-radius:3px;box-sizing:border-box;"></div>
<span class="t it" style="left:859.5px;top:1176.5px;color:#8c8c8c;letter-spacing:0.620px;">0.000 %</span>
<div class="a" style="left:1004px;top:981px;width:660px;height:247px;background:#262626;border:2px solid #2c2c2c;border-top-color:#222;border-radius:7px;box-sizing:border-box"></div>
<div class="a menu" style="left:115px;top:81px;width:440px;height:705px"></div>
<div class="a" style="left:116px;top:82px;width:44px;height:703px;background:rgba(255,255,255,0.014);"></div>
<div class="a" style="left:160px;top:86px;width:1px;height:695px;background:#282828;"></div>
<div class="a" style="left:168px;top:134px;width:378px;height:1px;background:#252525;"></div>
<div class="a" style="left:168px;top:294px;width:378px;height:1px;background:#252525;"></div>
<div class="a" style="left:168px;top:454px;width:378px;height:1px;background:#252525;"></div>
<div class="a" style="left:168px;top:578px;width:378px;height:1px;background:#252525;"></div>
<div class="a" style="left:168px;top:630px;width:378px;height:1px;background:#252525;"></div>
<div class="a" style="left:168px;top:682px;width:378px;height:1px;background:#252525;"></div>
<div class="a" style="left:168px;top:734px;width:378px;height:1px;background:#252525;"></div>
<span class="t it" style="left:172.2px;top:90.5px;color:#f2f2f2;letter-spacing:0.183px;">(Set Keyboard Focus Here)</span>
<svg class="a" style="left:454px;top:100px" width="24" height="16" fill="none" stroke="#f2f2f2" stroke-width="1.9"><path d="M0.8,2.2 H8.2 L14.2,13.4 H23.2 M13.6,2.2 H23.2"/></svg>
<span class="t it" style="left:484.3px;top:90.5px;color:#f2f2f2;letter-spacing:0.266px;">Click</span>
<span class="t it" style="left:172.2px;top:142.5px;color:#f2f2f2;letter-spacing:1.008px;">Cut</span>
<svg class="a" style="left:457px;top:151px" width="18" height="18" fill="none" stroke="#f2f2f2" stroke-width="2"><path d="M6,6 H12 V12 H6 Z M6,6 V3.8 A2.3,2.3 0 1 0 3.8,6 Z M12,6 H14.2 A2.3,2.3 0 1 0 12,3.8 Z M12,12 V14.2 A2.3,2.3 0 1 0 14.2,12 Z M6,12 H3.8 A2.3,2.3 0 1 0 6,14.2 Z"/></svg>
<span class="t it" style="left:484.8px;top:142.5px;color:#f2f2f2;letter-spacing:0.000px;">X</span>
<span class="t it" style="left:172.2px;top:178.5px;color:#f2f2f2;letter-spacing:0.177px;">Copy</span>
<svg class="a" style="left:457px;top:187px" width="18" height="18" fill="none" stroke="#f2f2f2" stroke-width="2"><path d="M6,6 H12 V12 H6 Z M6,6 V3.8 A2.3,2.3 0 1 0 3.8,6 Z M12,6 H14.2 A2.3,2.3 0 1 0 12,3.8 Z M12,12 V14.2 A2.3,2.3 0 1 0 14.2,12 Z M6,12 H3.8 A2.3,2.3 0 1 0 6,14.2 Z"/></svg>
<span class="t it" style="left:484.8px;top:178.5px;color:#f2f2f2;letter-spacing:0.000px;">C</span>
<span class="t it" style="left:172.2px;top:214.5px;color:#7f7f7f;letter-spacing:-0.250px;">Paste</span>
<svg class="a" style="left:457px;top:223px" width="18" height="18" fill="none" stroke="#7f7f7f" stroke-width="2"><path d="M6,6 H12 V12 H6 Z M6,6 V3.8 A2.3,2.3 0 1 0 3.8,6 Z M12,6 H14.2 A2.3,2.3 0 1 0 12,3.8 Z M12,12 V14.2 A2.3,2.3 0 1 0 14.2,12 Z M6,12 H3.8 A2.3,2.3 0 1 0 6,14.2 Z"/></svg>
<span class="t it" style="left:484.8px;top:214.5px;color:#7f7f7f;letter-spacing:0.000px;">V</span>
<span class="t it" style="left:172.2px;top:250.5px;color:#7f7f7f;letter-spacing:0.271px;">Insert Paste</span>
<span class="t it" style="left:172.2px;top:302.5px;color:#f2f2f2;letter-spacing:0.719px;">Insert</span>
<span class="t it" style="left:172.2px;top:338.5px;color:#f2f2f2;letter-spacing:0.713px;">Delete</span>
<span class="t it" style="left:172.2px;top:374.5px;color:#f2f2f2;letter-spacing:0.832px;">Duplicate</span>
<svg class="a" style="left:457px;top:383px" width="18" height="18" fill="none" stroke="#f2f2f2" stroke-width="2"><path d="M6,6 H12 V12 H6 Z M6,6 V3.8 A2.3,2.3 0 1 0 3.8,6 Z M12,6 H14.2 A2.3,2.3 0 1 0 12,3.8 Z M12,12 V14.2 A2.3,2.3 0 1 0 14.2,12 Z M6,12 H3.8 A2.3,2.3 0 1 0 6,14.2 Z"/></svg>
<span class="t it" style="left:484.8px;top:374.5px;color:#f2f2f2;letter-spacing:0.000px;">D</span>
<span class="t it" style="left:172.2px;top:410.5px;color:#f2f2f2;letter-spacing:0.472px;">Repeat</span>
<span class="t it" style="left:172.2px;top:462.5px;color:#f2f2f2;letter-spacing:0.300px;">Create Section</span>
<span class="t it" style="left:172.2px;top:498.5px;color:#7f7f7f;letter-spacing:0.427px;">Delete Section</span>
<span class="t it" style="left:172.2px;top:534.5px;color:#7f7f7f;letter-spacing:0.483px;">Delete All Sections</span>
<span class="t it" style="left:172.2px;top:586.5px;color:#f2f2f2;letter-spacing:0.580px;">Organize</span>
<svg class="a" style="left:532px;top:597px" width="10" height="13"><path d="M0.3,0.3 V12.3 L9.3,6.3 Z" fill="#f2f2f2"/></svg>
<span class="t it" style="left:172.2px;top:638.5px;color:#f2f2f2;letter-spacing:0.385px;">Render Selection to Disk</span>
<span class="t it" style="left:172.2px;top:690.5px;color:#f2f2f2;letter-spacing:0.234px;">Keep Sequence Sorted</span>
<div class="a" style="left:124px;top:742px;width:422px;height:36px;background:#359bb2;border-radius:4px;"></div>
<svg class="a" style="left:174px;top:755px" width="14" height="14"><path d="M0.85,7.7 C1.9,3.9 2.6,2.55 3.6,2.55 C5.0,2.55 5.6,4.6 6.5,6.85 C7.4,9.1 8.0,11.15 9.4,11.15 C10.4,11.15 11.2,9.6 12.1,6.0" fill="none" stroke="#000" stroke-width="1.7" stroke-linecap="butt"/></svg>
<span class="t it" style="left:195.5px;top:742.5px;color:#000;letter-spacing:0.482px;">Paketti..</span>
<svg class="a" style="left:532px;top:753px" width="10" height="13"><path d="M0.3,0.3 V12.3 L9.3,6.3 Z" fill="#000"/></svg>
<div class="a menu" style="left:551px;top:733px;width:463px;height:337px"></div>
<div class="a" style="left:552px;top:734px;width:44px;height:335px;background:rgba(255,255,255,0.014);"></div>
<div class="a" style="left:596px;top:738px;width:1px;height:327px;background:#282828;"></div>
<div class="a" style="left:560px;top:742px;width:448px;height:36px;background:#359bb2;border-radius:4px;"></div>
<div class="a" style="left:604px;top:894px;width:404px;height:1px;background:#252525;"></div>
<div class="a" style="left:604px;top:982px;width:404px;height:1px;background:#252525;"></div>
<svg class="a" style="left:609.7px;top:755px" width="14" height="14"><path d="M0.85,7.7 C1.9,3.9 2.6,2.55 3.6,2.55 C5.0,2.55 5.6,4.6 6.5,6.85 C7.4,9.1 8.0,11.15 9.4,11.15 C10.4,11.15 11.2,9.6 12.1,6.0" fill="none" stroke="#000" stroke-width="1.7" stroke-linecap="butt"/></svg>
<span class="t it" style="left:631.5px;top:742.5px;color:#000;letter-spacing:0.394px;">Resize all non-empty Patterns..</span>
<svg class="a" style="left:994px;top:753px" width="10" height="13"><path d="M0.3,0.3 V12.3 L9.3,6.3 Z" fill="#000"/></svg>
<svg class="a" style="left:609.7px;top:791px" width="14" height="14"><path d="M0.85,7.7 C1.9,3.9 2.6,2.55 3.6,2.55 C5.0,2.55 5.6,4.6 6.5,6.85 C7.4,9.1 8.0,11.15 9.4,11.15 C10.4,11.15 11.2,9.6 12.1,6.0" fill="none" stroke="#f2f2f2" stroke-width="1.7" stroke-linecap="butt"/></svg>
<span class="t it" style="left:631.5px;top:778.5px;color:#f2f2f2;letter-spacing:0.279px;">Sequences/Sections..</span>
<svg class="a" style="left:994px;top:789px" width="10" height="13"><path d="M0.3,0.3 V12.3 L9.3,6.3 Z" fill="#f2f2f2"/></svg>
<svg class="a" style="left:609.7px;top:827px" width="14" height="14"><path d="M0.85,7.7 C1.9,3.9 2.6,2.55 3.6,2.55 C5.0,2.55 5.6,4.6 6.5,6.85 C7.4,9.1 8.0,11.15 9.4,11.15 C10.4,11.15 11.2,9.6 12.1,6.0" fill="none" stroke="#f2f2f2" stroke-width="1.7" stroke-linecap="butt"/></svg>
<span class="t it" style="left:631.5px;top:814.5px;color:#f2f2f2;letter-spacing:0.382px;">Show Paketti KeyBindings...</span>
<svg class="a" style="left:609.7px;top:863px" width="14" height="14"><path d="M0.85,7.7 C1.9,3.9 2.6,2.55 3.6,2.55 C5.0,2.55 5.6,4.6 6.5,6.85 C7.4,9.1 8.0,11.15 9.4,11.15 C10.4,11.15 11.2,9.6 12.1,6.0" fill="none" stroke="#f2f2f2" stroke-width="1.7" stroke-linecap="butt"/></svg>
<span class="t it" style="left:631.5px;top:850.5px;color:#f2f2f2;letter-spacing:0.237px;">Show Renoise KeyBindings...</span>
<svg class="a" style="left:609.7px;top:915px" width="14" height="14"><path d="M0.85,7.7 C1.9,3.9 2.6,2.55 3.6,2.55 C5.0,2.55 5.6,4.6 6.5,6.85 C7.4,9.1 8.0,11.15 9.4,11.15 C10.4,11.15 11.2,9.6 12.1,6.0" fill="none" stroke="#f2f2f2" stroke-width="1.7" stroke-linecap="butt"/></svg>
<span class="t it" style="left:631.5px;top:902.5px;color:#f2f2f2;letter-spacing:0.269px;">Clone and Expand Pattern to LPB*2</span>
<svg class="a" style="left:609.7px;top:951px" width="14" height="14"><path d="M0.85,7.7 C1.9,3.9 2.6,2.55 3.6,2.55 C5.0,2.55 5.6,4.6 6.5,6.85 C7.4,9.1 8.0,11.15 9.4,11.15 C10.4,11.15 11.2,9.6 12.1,6.0" fill="none" stroke="#f2f2f2" stroke-width="1.7" stroke-linecap="butt"/></svg>
<span class="t it" style="left:631.5px;top:938.5px;color:#f2f2f2;letter-spacing:0.291px;">Clone and Shrink Pattern to LPB/2</span>
<svg class="a" style="left:609.7px;top:1003px" width="14" height="14"><path d="M0.85,7.7 C1.9,3.9 2.6,2.55 3.6,2.55 C5.0,2.55 5.6,4.6 6.5,6.85 C7.4,9.1 8.0,11.15 9.4,11.15 C10.4,11.15 11.2,9.6 12.1,6.0" fill="none" stroke="#f2f2f2" stroke-width="1.7" stroke-linecap="butt"/></svg>
<span class="t it" style="left:631.5px;top:990.5px;color:#f2f2f2;letter-spacing:0.516px;">Show/Hide Pattern Matrix</span>
<svg class="a" style="left:609.7px;top:1039px" width="14" height="14"><path d="M0.85,7.7 C1.9,3.9 2.6,2.55 3.6,2.55 C5.0,2.55 5.6,4.6 6.5,6.85 C7.4,9.1 8.0,11.15 9.4,11.15 C10.4,11.15 11.2,9.6 12.1,6.0" fill="none" stroke="#f2f2f2" stroke-width="1.7" stroke-linecap="butt"/></svg>
<span class="t it" style="left:631.5px;top:1026.5px;color:#f2f2f2;letter-spacing:0.361px;">Clone Current Sequence</span>
<div class="a menu" style="left:1013px;top:733px;width:668px;height:501px"></div>
<div class="a" style="left:1014px;top:734px;width:44px;height:499px;background:rgba(255,255,255,0.014);"></div>
<div class="a" style="left:1058px;top:738px;width:1px;height:491px;background:#282828;"></div>
<div class="a" style="left:1066px;top:750px;width:606px;height:1px;background:#252525;"></div>
<svg class="a" style="left:1071.7px;top:771px" width="14" height="14"><path d="M0.85,7.7 C1.9,3.9 2.6,2.55 3.6,2.55 C5.0,2.55 5.6,4.6 6.5,6.85 C7.4,9.1 8.0,11.15 9.4,11.15 C10.4,11.15 11.2,9.6 12.1,6.0" fill="none" stroke="#f2f2f2" stroke-width="1.7" stroke-linecap="butt"/></svg>
<span class="t it" style="left:1093.3px;top:758.5px;color:#f2f2f2;letter-spacing:0.570px;">Resize all non-empty Patterns to current Pattern length</span>
<svg class="a" style="left:1071.7px;top:807px" width="14" height="14"><path d="M0.85,7.7 C1.9,3.9 2.6,2.55 3.6,2.55 C5.0,2.55 5.6,4.6 6.5,6.85 C7.4,9.1 8.0,11.15 9.4,11.15 C10.4,11.15 11.2,9.6 12.1,6.0" fill="none" stroke="#f2f2f2" stroke-width="1.7" stroke-linecap="butt"/></svg>
<span class="t it" style="left:1093.3px;top:794.5px;color:#f2f2f2;letter-spacing:0.465px;">Resize all non-empty Patterns to 012</span>
<svg class="a" style="left:1071.7px;top:843px" width="14" height="14"><path d="M0.85,7.7 C1.9,3.9 2.6,2.55 3.6,2.55 C5.0,2.55 5.6,4.6 6.5,6.85 C7.4,9.1 8.0,11.15 9.4,11.15 C10.4,11.15 11.2,9.6 12.1,6.0" fill="none" stroke="#f2f2f2" stroke-width="1.7" stroke-linecap="butt"/></svg>
<span class="t it" style="left:1093.3px;top:830.5px;color:#f2f2f2;letter-spacing:0.465px;">Resize all non-empty Patterns to 016</span>
<svg class="a" style="left:1071.7px;top:879px" width="14" height="14"><path d="M0.85,7.7 C1.9,3.9 2.6,2.55 3.6,2.55 C5.0,2.55 5.6,4.6 6.5,6.85 C7.4,9.1 8.0,11.15 9.4,11.15 C10.4,11.15 11.2,9.6 12.1,6.0" fill="none" stroke="#f2f2f2" stroke-width="1.7" stroke-linecap="butt"/></svg>
<span class="t it" style="left:1093.3px;top:866.5px;color:#f2f2f2;letter-spacing:0.465px;">Resize all non-empty Patterns to 024</span>
<svg class="a" style="left:1071.7px;top:915px" width="14" height="14"><path d="M0.85,7.7 C1.9,3.9 2.6,2.55 3.6,2.55 C5.0,2.55 5.6,4.6 6.5,6.85 C7.4,9.1 8.0,11.15 9.4,11.15 C10.4,11.15 11.2,9.6 12.1,6.0" fill="none" stroke="#f2f2f2" stroke-width="1.7" stroke-linecap="butt"/></svg>
<span class="t it" style="left:1093.3px;top:902.5px;color:#f2f2f2;letter-spacing:0.465px;">Resize all non-empty Patterns to 032</span>
<svg class="a" style="left:1071.7px;top:951px" width="14" height="14"><path d="M0.85,7.7 C1.9,3.9 2.6,2.55 3.6,2.55 C5.0,2.55 5.6,4.6 6.5,6.85 C7.4,9.1 8.0,11.15 9.4,11.15 C10.4,11.15 11.2,9.6 12.1,6.0" fill="none" stroke="#f2f2f2" stroke-width="1.7" stroke-linecap="butt"/></svg>
<span class="t it" style="left:1093.3px;top:938.5px;color:#f2f2f2;letter-spacing:0.465px;">Resize all non-empty Patterns to 048</span>
<svg class="a" style="left:1071.7px;top:987px" width="14" height="14"><path d="M0.85,7.7 C1.9,3.9 2.6,2.55 3.6,2.55 C5.0,2.55 5.6,4.6 6.5,6.85 C7.4,9.1 8.0,11.15 9.4,11.15 C10.4,11.15 11.2,9.6 12.1,6.0" fill="none" stroke="#f2f2f2" stroke-width="1.7" stroke-linecap="butt"/></svg>
<span class="t it" style="left:1093.3px;top:974.5px;color:#f2f2f2;letter-spacing:0.465px;">Resize all non-empty Patterns to 064</span>
<svg class="a" style="left:1071.7px;top:1023px" width="14" height="14"><path d="M0.85,7.7 C1.9,3.9 2.6,2.55 3.6,2.55 C5.0,2.55 5.6,4.6 6.5,6.85 C7.4,9.1 8.0,11.15 9.4,11.15 C10.4,11.15 11.2,9.6 12.1,6.0" fill="none" stroke="#f2f2f2" stroke-width="1.7" stroke-linecap="butt"/></svg>
<span class="t it" style="left:1093.3px;top:1010.5px;color:#f2f2f2;letter-spacing:0.465px;">Resize all non-empty Patterns to 096</span>
<svg class="a" style="left:1071.7px;top:1059px" width="14" height="14"><path d="M0.85,7.7 C1.9,3.9 2.6,2.55 3.6,2.55 C5.0,2.55 5.6,4.6 6.5,6.85 C7.4,9.1 8.0,11.15 9.4,11.15 C10.4,11.15 11.2,9.6 12.1,6.0" fill="none" stroke="#f2f2f2" stroke-width="1.7" stroke-linecap="butt"/></svg>
<span class="t it" style="left:1093.3px;top:1046.5px;color:#f2f2f2;letter-spacing:0.465px;">Resize all non-empty Patterns to 128</span>
<svg class="a" style="left:1071.7px;top:1095px" width="14" height="14"><path d="M0.85,7.7 C1.9,3.9 2.6,2.55 3.6,2.55 C5.0,2.55 5.6,4.6 6.5,6.85 C7.4,9.1 8.0,11.15 9.4,11.15 C10.4,11.15 11.2,9.6 12.1,6.0" fill="none" stroke="#f2f2f2" stroke-width="1.7" stroke-linecap="butt"/></svg>
<span class="t it" style="left:1093.3px;top:1082.5px;color:#f2f2f2;letter-spacing:0.465px;">Resize all non-empty Patterns to 192</span>
<svg class="a" style="left:1071.7px;top:1131px" width="14" height="14"><path d="M0.85,7.7 C1.9,3.9 2.6,2.55 3.6,2.55 C5.0,2.55 5.6,4.6 6.5,6.85 C7.4,9.1 8.0,11.15 9.4,11.15 C10.4,11.15 11.2,9.6 12.1,6.0" fill="none" stroke="#f2f2f2" stroke-width="1.7" stroke-linecap="butt"/></svg>
<span class="t it" style="left:1093.3px;top:1118.5px;color:#f2f2f2;letter-spacing:0.465px;">Resize all non-empty Patterns to 256</span>
<svg class="a" style="left:1071.7px;top:1167px" width="14" height="14"><path d="M0.85,7.7 C1.9,3.9 2.6,2.55 3.6,2.55 C5.0,2.55 5.6,4.6 6.5,6.85 C7.4,9.1 8.0,11.15 9.4,11.15 C10.4,11.15 11.2,9.6 12.1,6.0" fill="none" stroke="#f2f2f2" stroke-width="1.7" stroke-linecap="butt"/></svg>
<span class="t it" style="left:1093.3px;top:1154.5px;color:#f2f2f2;letter-spacing:0.465px;">Resize all non-empty Patterns to 384</span>
<svg class="a" style="left:1071.7px;top:1203px" width="14" height="14"><path d="M0.85,7.7 C1.9,3.9 2.6,2.55 3.6,2.55 C5.0,2.55 5.6,4.6 6.5,6.85 C7.4,9.1 8.0,11.15 9.4,11.15 C10.4,11.15 11.2,9.6 12.1,6.0" fill="none" stroke="#f2f2f2" stroke-width="1.7" stroke-linecap="butt"/></svg>
<span class="t it" style="left:1093.3px;top:1190.5px;color:#f2f2f2;letter-spacing:0.465px;">Resize all non-empty Patterns to 512</span>
</div>
</body></html>
